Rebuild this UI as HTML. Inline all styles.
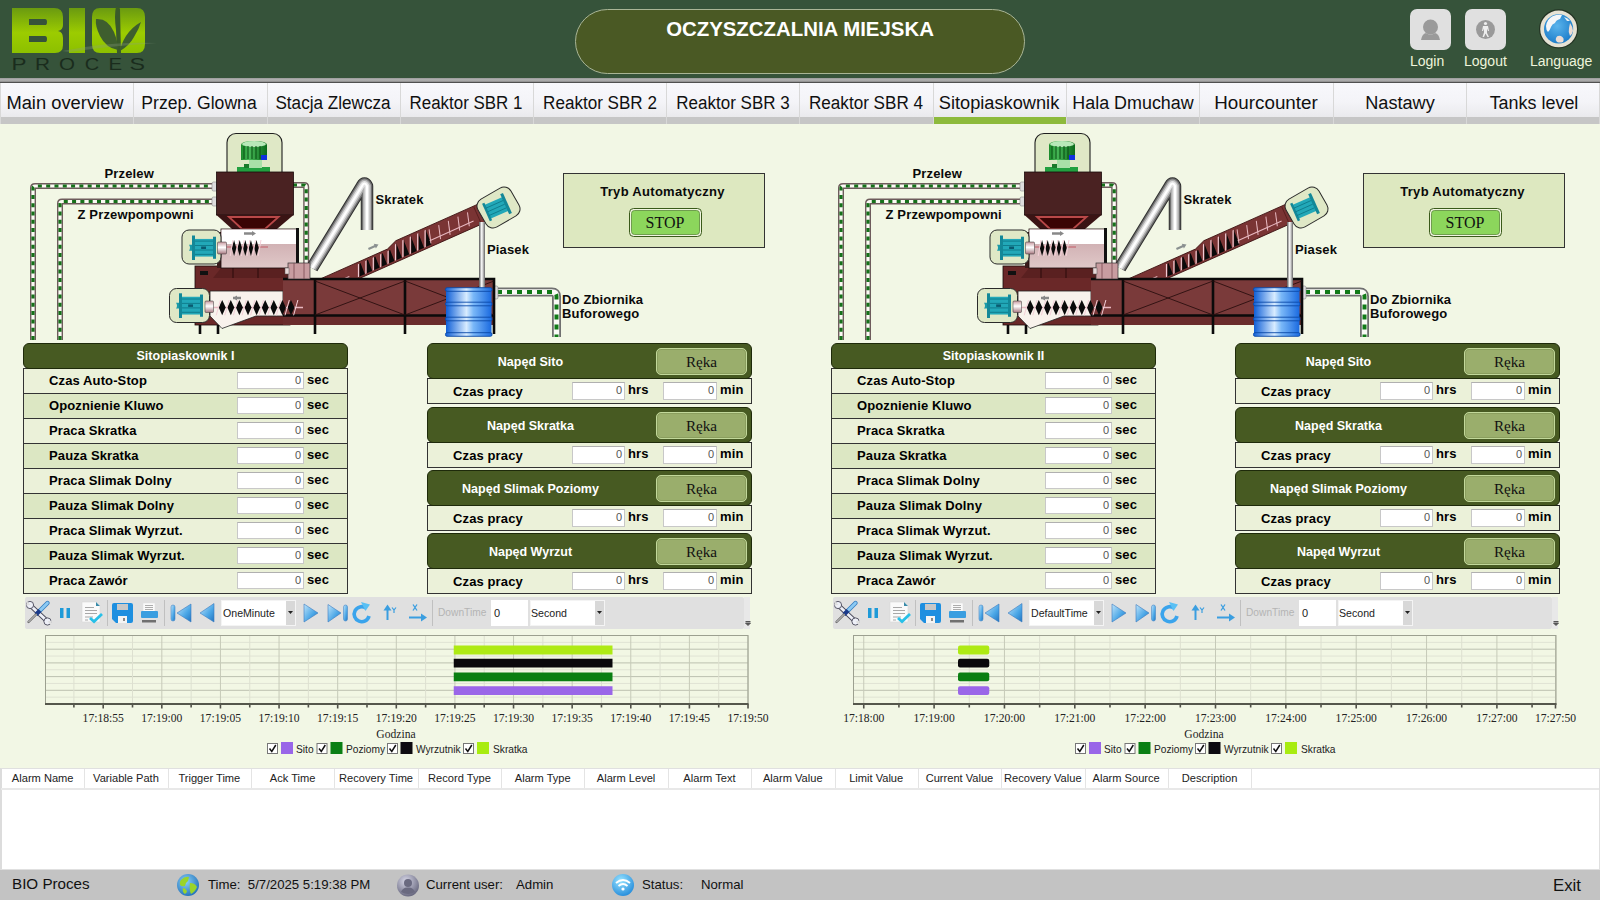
<!DOCTYPE html><html><head><meta charset="utf-8"><style>
*{margin:0;padding:0;box-sizing:border-box}
html,body{width:1600px;height:900px;overflow:hidden;background:#f2f7e5;font-family:'Liberation Sans', sans-serif}
.a{position:absolute}
.t{position:absolute;white-space:nowrap;line-height:1}
.tab{position:absolute;top:83px;height:41px;background:linear-gradient(#f8f8fc,#f4f4f8 45%,#ebebee 80%,#e0e0e0);}
.tab .bb{position:absolute;left:0;right:0;bottom:0;height:7px;background:#c6c6c6}
.tab .lb{position:absolute;left:0;right:0;top:0;bottom:0;text-align:center;font-size:18px;line-height:39px;color:#101010}
.hdr{position:absolute;background:#475a22;border-radius:6px;border:1px solid #1e2a0a;z-index:2;color:#fff;font-weight:bold;text-align:center}
.row{position:absolute;border:1px solid #333;border-top:none}
.lbl{position:absolute;font-weight:bold;font-size:13px;letter-spacing:0.12px;color:#000;white-space:nowrap;line-height:1}
.inp{position:absolute;background:#fff;border:1px solid #c8c8c8;border-top-color:#b0b0b0;font-size:11px;color:#555;text-align:right;padding-right:2px;line-height:14px}
</style></head><body>
<div class="a" style="left:0;top:0;width:1600px;height:78px;background:#36533a"></div>
<div class="a" style="left:0;top:78px;width:1600px;height:4px;background:linear-gradient(#9a9a9a,#b4b4b4 50%,#8a8a8a)"></div>
<div class="a" style="left:0;top:82px;width:1600px;height:1px;background:#505050"></div>
<svg class="a" style="left:0;top:0" width="170" height="78" viewBox="0 0 170 78">
<defs><linearGradient id="lg" x1="0" y1="0" x2="0" y2="1"><stop offset="0" stop-color="#6a9a10"/><stop offset="0.55" stop-color="#9ccc00"/><stop offset="1" stop-color="#8cc000"/></linearGradient></defs>
<path fill="url(#lg)" d="M12 8 H54 Q63 8 63 17 V25 Q63 30 58 31 Q63 32 63 38 V45 Q63 53 55 53 H12 Z M29 19 V25 H46 Q47 25 47 22 Q47 19 45 19 Z M29 36 V42 H46 Q47 42 47 39 Q47 36 45 36 Z" fill-rule="evenodd"/>
<rect x="69" y="8" width="16" height="45" fill="url(#lg)"/>
<path fill="url(#lg)" d="M100 8 H137 Q145 8 145 17 V44 Q145 53 137 53 H100 Q92 53 92 44 V17 Q92 8 100 8 Z"/>
<path fill="#3a5a2a" d="M116 7 Q119 6 120 9 L121 53 L117 53 L116 30 Q114 15 116 7 Z"/>
<path fill="#3e5e2e" d="M96 19 Q108 18 114 32 Q118 42 118 50 Q106 48 100 36 Q95 26 96 19 Z"/>
<path fill="#3e5e2e" d="M141 22 Q132 27 126 36 Q121 44 120 51 Q129 46 134 37 Q139 29 141 22 Z"/>
<text x="11.6" y="70" font-family="Liberation Sans" font-size="17" fill="#1a2c1d" textLength="15.0" lengthAdjust="spacingAndGlyphs">P</text><text x="35" y="70" font-family="Liberation Sans" font-size="17" fill="#1a2c1d" textLength="15.0" lengthAdjust="spacingAndGlyphs">R</text><text x="59" y="70" font-family="Liberation Sans" font-size="17" fill="#1a2c1d" textLength="16.0" lengthAdjust="spacingAndGlyphs">O</text><text x="84.7" y="70" font-family="Liberation Sans" font-size="17" fill="#1a2c1d" textLength="14.5" lengthAdjust="spacingAndGlyphs">C</text><text x="108.6" y="70" font-family="Liberation Sans" font-size="17" fill="#1a2c1d" textLength="13.6" lengthAdjust="spacingAndGlyphs">E</text><text x="129.6" y="70" font-family="Liberation Sans" font-size="17" fill="#1a2c1d" textLength="15.5" lengthAdjust="spacingAndGlyphs">S</text><path d="M62 51 Q110 41 157 43 Q110 46 70 52 Z" fill="#8aa080" opacity="0.3"/>
</svg>
<div class="a" style="left:575px;top:9px;width:450px;height:65px;border-radius:33px;background:#4a5924;border:1.5px solid #a9b596"></div>
<div class="t" style="left:575px;width:450px;top:19px;text-align:center;color:#fff;font-weight:bold;font-size:20.4px">OCZYSZCZALNIA MIEJSKA</div>
<div class="a" style="left:1410px;top:9px;width:41px;height:41px;border-radius:7px;background:#e0e0e0"></div>
<svg class="a" style="left:1410px;top:9px" width="41" height="41"><circle cx="20.5" cy="18" r="7.5" fill="#9a9a9a"/><path d="M11 31 Q12 25 16 24 Q20.5 27 25 24 Q29 25 30 31 Z" fill="#9a9a9a"/></svg>
<div class="a" style="left:1465px;top:9px;width:41px;height:41px;border-radius:7px;background:#e0e0e0"></div>
<svg class="a" style="left:1465px;top:9px" width="41" height="41"><circle cx="20.5" cy="20.5" r="9.5" fill="#9a9a9a"/><circle cx="20.5" cy="14.5" r="1.6" fill="#eee"/><path d="M18 17 L23 17 L24 22 L23 22 L22 19.5 L22 24 L24 28 L22.5 28 L20.5 24.5 L19 28 L17.5 28 L19 23.5 L19 19.5 L18 22 L17 22 Z" fill="#eee"/></svg>
<svg class="a" style="left:1536px;top:6px" width="46" height="46"><defs><radialGradient id="gb" cx="0.45" cy="0.4" r="0.65"><stop offset="0" stop-color="#5ab4ec"/><stop offset="1" stop-color="#1a7ac8"/></radialGradient></defs>
<circle cx="22.6" cy="22.9" r="19.6" fill="#1e2a1e" opacity="0.75"/>
<circle cx="22.6" cy="22.9" r="18.4" fill="#e6e2d4"/><circle cx="22.6" cy="22.9" r="14.6" fill="url(#gb)"/>
<path d="M10 20 Q11 13 17 10 Q22 8 26 9 L24 13 Q20 14 19 17 Q16 18 15 21 Q14 24 12 26 Q10 24 10 20 Z" fill="#f4f6f8"/>
<path d="M20 32 Q21 29 25 30 Q29 32 27 36 Q24 37 21 36 Q19 34 20 32 Z" fill="#ecdcd4"/>
<path d="M34 17 Q37 21 37 25 Q36 29 34 30 Q32 26 33 22 Z" fill="#ecdcd4"/>
<path d="M28 11 Q32 12 34 15 L31 15 Z" fill="#e8f0f4"/></svg>
<div class="t" style="left:1410px;top:54px;font-size:14px;color:#eef5dc">Login</div>
<div class="t" style="left:1464px;top:54px;font-size:14px;color:#eef5dc">Logout</div>
<div class="t" style="left:1530px;top:54px;font-size:14px;color:#eef5dc">Language</div>
<div class="a" style="left:0;top:83px;width:1600px;height:41px;background:#d8d8d8"></div>
<div class="tab" style="left:1px;width:132px"><div class="bb" style="background:#c6c6c6"></div></div>
<div class="t" style="left:-34.7px;width:200px;top:94px;text-align:center;font-size:18px;color:#101010;transform:scaleX(1.019)">Main overview</div>
<div class="tab" style="left:134px;width:133px"><div class="bb" style="background:#c6c6c6"></div></div>
<div class="t" style="left:98.9px;width:200px;top:94px;text-align:center;font-size:18px;color:#101010;transform:scaleX(0.977)">Przep. Glowna</div>
<div class="tab" style="left:268px;width:132px"><div class="bb" style="background:#c6c6c6"></div></div>
<div class="t" style="left:233.0px;width:200px;top:94px;text-align:center;font-size:18px;color:#101010;transform:scaleX(0.951)">Stacja Zlewcza</div>
<div class="tab" style="left:401px;width:132px"><div class="bb" style="background:#c6c6c6"></div></div>
<div class="t" style="left:366.4px;width:200px;top:94px;text-align:center;font-size:18px;color:#101010;transform:scaleX(0.940)">Reaktor SBR 1</div>
<div class="tab" style="left:534px;width:132px"><div class="bb" style="background:#c6c6c6"></div></div>
<div class="t" style="left:499.9px;width:200px;top:94px;text-align:center;font-size:18px;color:#101010;transform:scaleX(0.948)">Reaktor SBR 2</div>
<div class="tab" style="left:667px;width:132px"><div class="bb" style="background:#c6c6c6"></div></div>
<div class="t" style="left:633.2px;width:200px;top:94px;text-align:center;font-size:18px;color:#101010;transform:scaleX(0.944)">Reaktor SBR 3</div>
<div class="tab" style="left:800px;width:133px"><div class="bb" style="background:#c6c6c6"></div></div>
<div class="t" style="left:766.0px;width:200px;top:94px;text-align:center;font-size:18px;color:#101010;transform:scaleX(0.950)">Reaktor SBR 4</div>
<div class="tab" style="left:934px;width:132px"><div class="bb" style="background:#8dba3c"></div></div>
<div class="t" style="left:898.7px;width:200px;top:94px;text-align:center;font-size:18px;color:#101010;transform:scaleX(1.012)">Sitopiaskownik</div>
<div class="tab" style="left:1067px;width:132px"><div class="bb" style="background:#c6c6c6"></div></div>
<div class="t" style="left:1032.5px;width:200px;top:94px;text-align:center;font-size:18px;color:#101010;transform:scaleX(0.994)">Hala Dmuchaw</div>
<div class="tab" style="left:1200px;width:133px"><div class="bb" style="background:#c6c6c6"></div></div>
<div class="t" style="left:1166.3px;width:200px;top:94px;text-align:center;font-size:18px;color:#101010;transform:scaleX(1.045)">Hourcounter</div>
<div class="tab" style="left:1334px;width:132px"><div class="bb" style="background:#c6c6c6"></div></div>
<div class="t" style="left:1299.5px;width:200px;top:94px;text-align:center;font-size:18px;color:#101010;transform:scaleX(1.007)">Nastawy</div>
<div class="tab" style="left:1467px;width:132px"><div class="bb" style="background:#c6c6c6"></div></div>
<div class="t" style="left:1433.5px;width:200px;top:94px;text-align:center;font-size:18px;color:#101010;transform:scaleX(0.996)">Tanks level</div>
<div id="content"></div>
<svg class="a" style="left:0px;top:124px" width="800" height="222" viewBox="0 124 800 222"><defs>
<linearGradient id="gp" x1="0" y1="0" x2="1" y2="0"><stop offset="0" stop-color="#555"/><stop offset="0.45" stop-color="#fff"/><stop offset="1" stop-color="#666"/></linearGradient>
<linearGradient id="barrel" x1="0" y1="0" x2="1" y2="0"><stop offset="0" stop-color="#1060d8"/><stop offset="0.45" stop-color="#d8ecff"/><stop offset="0.6" stop-color="#7ab8f8"/><stop offset="1" stop-color="#1a6ae0"/></linearGradient>
<linearGradient id="coup" x1="0" y1="0" x2="0" y2="1"><stop offset="0" stop-color="#c89aa0"/><stop offset="0.45" stop-color="#fff"/><stop offset="1" stop-color="#a87880"/></linearGradient>
<linearGradient id="hous" x1="0" y1="0" x2="0" y2="1"><stop offset="0" stop-color="#c8a4a8"/><stop offset="1" stop-color="#e0c8c8"/></linearGradient>
<linearGradient id="mgreen" x1="0" y1="0" x2="1" y2="0"><stop offset="0" stop-color="#1a8a2a"/><stop offset="0.3" stop-color="#48b858"/><stop offset="1" stop-color="#0a6a1a"/></linearGradient>
</defs><path d="M33 340 V188 Q33 186 35 186 H214" fill="none" stroke="#6e5c5c" stroke-width="6" stroke-linejoin="miter"/><path d="M33 340 V188 Q33 186 35 186 H214" fill="none" stroke="#fbfbf4" stroke-width="3.2" stroke-linejoin="miter"/><path d="M33 340 V188 Q33 186 35 186 H214" fill="none" stroke="#16701a" stroke-width="3.2" stroke-dasharray="4 4.3" stroke-linejoin="miter"/><path d="M60 340 V203.5 Q60 201.5 62 201.5 H214" fill="none" stroke="#6e5c5c" stroke-width="6" stroke-linejoin="miter"/><path d="M60 340 V203.5 Q60 201.5 62 201.5 H214" fill="none" stroke="#fbfbf4" stroke-width="3.2" stroke-linejoin="miter"/><path d="M60 340 V203.5 Q60 201.5 62 201.5 H214" fill="none" stroke="#16701a" stroke-width="3.2" stroke-dasharray="4 4.3" stroke-linejoin="miter"/><path d="M293 185 H304 Q306.2 185 306.2 187 V264" fill="none" stroke="#6e5c5c" stroke-width="6" stroke-linejoin="miter"/><path d="M293 185 H304 Q306.2 185 306.2 187 V264" fill="none" stroke="#fbfbf4" stroke-width="3.2" stroke-linejoin="miter"/><path d="M293 185 H304 Q306.2 185 306.2 187 V264" fill="none" stroke="#16701a" stroke-width="3.2" stroke-dasharray="4 4.3" stroke-linejoin="miter"/><path d="M497 292 H552 Q556.5 292 556.5 296.5 V337" fill="none" stroke="#707070" stroke-width="9"/><path d="M497 292 H552 Q556.5 292 556.5 296.5 V337" fill="none" stroke="#fafaf6" stroke-width="5.4"/><path d="M497 292 H552 Q556.5 292 556.5 296.5 V337" fill="none" stroke="#127a18" stroke-width="4" stroke-dasharray="5 5"/><rect x="212" y="182" width="5" height="9" rx="1.5" fill="#ddd" stroke="#888" stroke-width="0.6"/><rect x="212" y="197" width="5" height="9" rx="1.5" fill="#ddd" stroke="#888" stroke-width="0.6"/><rect x="493" y="286" width="5" height="13" rx="1.5" fill="#ddd" stroke="#888" stroke-width="0.6"/><path d="M312 268 L362 186 Q364.5 181 367 186 L367 230" fill="none" stroke="#2e2e2e" stroke-width="12.5" stroke-linejoin="round"/><path d="M312 268 L362 186 Q364.5 181 367 186 L367 230" fill="none" stroke="#707070" stroke-width="10.5" stroke-linejoin="round"/><path d="M312 268 L362 186 Q364.5 181 367 186 L367 230" fill="none" stroke="#b0b0b0" stroke-width="8" stroke-linejoin="round"/><path d="M312 268 L362 186 Q364.5 181 367 186 L367 230" fill="none" stroke="#e4e4e4" stroke-width="5" stroke-linejoin="round"/><path d="M312 268 L362 186 Q364.5 181 367 186 L367 230" fill="none" stroke="#ffffff" stroke-width="2.2" stroke-linejoin="round"/><rect x="227" y="133.5" width="55" height="50" rx="9" fill="#dfe8c6" stroke="#1e1e1e" stroke-width="1.1"/><rect x="237" y="167" width="33" height="5.5" fill="#22a040"/><rect x="244" y="164" width="8" height="4" fill="#1a7a2a"/><rect x="249" y="159" width="13" height="9" fill="#a8e0a8"/><path d="M241 145 Q241 141 254 141 Q267 141 267 145 V160 H241 Z" fill="url(#mgreen)"/><ellipse cx="254" cy="144" rx="12" ry="3" fill="#b8e8b8"/><path d="M244 146 V159 M248 146 V159 M252 146 V159 M256 146 V159 M260 146 V159" stroke="#064a10" stroke-width="1"/><rect x="261" y="155" width="6" height="5" fill="#1030e0"/><rect x="216.5" y="172" width="77" height="43" fill="#4a2222" stroke="#1a0a0a" stroke-width="0.8"/><path d="M216.5 215 H293.5 L277 229 H232 Z" fill="#3a1414"/><path d="M229 217 H278.5 L265 229 H242 Z" fill="#3a0404" stroke="#b84848" stroke-width="1.8"/><rect x="195" y="266" width="95" height="59" fill="#6a2828" stroke="#1a0a0a" stroke-width="0.8"/><rect x="200" y="271" width="8" height="4" fill="#111"/><path d="M213 278 L221 268 H290 V278 Z" fill="#5a2020"/><path d="M233 268 V278 M258 268 V278" stroke="#2a0a0a" stroke-width="1"/><rect x="217" y="232" width="5" height="36" fill="#3a1a1a"/><rect x="221" y="229" width="77" height="39" fill="url(#hous)" stroke="#1a0a0a" stroke-width="0.8"/><rect x="221.5" y="229.5" width="76" height="14.5" fill="#fff"/><rect x="296" y="228" width="3" height="40" fill="#111"/><path d="M244 233.5 H253" stroke="#888" stroke-width="2.5"/><path d="M252 231 L256 233.5 L252 236 Z" fill="#888"/><line x1="226" y1="247" x2="268" y2="247" stroke="#c87880" stroke-width="1.5"/><path d="M231.8 248.0 L234.1 240 L236.3 248.0 L234.1 256 Z" fill="#0a0a0a"/><path d="M237.4 248.0 L239.7 240 L241.9 248.0 L239.7 256 Z" fill="#0a0a0a"/><path d="M243.0 248.0 L245.3 240 L247.5 248.0 L245.3 256 Z" fill="#0a0a0a"/><path d="M248.6 248.0 L250.9 240 L253.1 248.0 L250.9 256 Z" fill="#0a0a0a"/><path d="M254.2 248.0 L256.5 240 L258.7 248.0 L256.5 256 Z" fill="#0a0a0a"/><line x1="230.2" y1="256" x2="233.0" y2="240" stroke="#f4d0d8" stroke-width="1"/><line x1="235.8" y1="256" x2="238.6" y2="240" stroke="#f4d0d8" stroke-width="1"/><line x1="241.4" y1="256" x2="244.2" y2="240" stroke="#f4d0d8" stroke-width="1"/><line x1="247.0" y1="256" x2="249.8" y2="240" stroke="#f4d0d8" stroke-width="1"/><line x1="252.6" y1="256" x2="255.4" y2="240" stroke="#f4d0d8" stroke-width="1"/><line x1="258.2" y1="256" x2="261.0" y2="240" stroke="#f4d0d8" stroke-width="1"/><path d="M210 291 H283 V316 H256 L222 328.5 L210 316 Z" fill="#f8f2ec" stroke="#222" stroke-width="0.8"/><path d="M233 298 H241" stroke="#888" stroke-width="2.5"/><path d="M237 295.5 L233 298 L237 300.5 Z" fill="#888"/><clipPath id="icl0"><path transform="translate(488.8 220.9) rotate(-24)" d="M-8 -1.8 V-17.5 H-93 L-102 -13.6 H-178 V-1.8 Z"/></clipPath><g transform="translate(488.8 220.9) rotate(-24)"><path d="M0 0 V-19.7 H-93 L-104 -15.5 H-178 V0 Z" fill="#7a3434" stroke="#3a1010" stroke-width="0.8"/><path d="M-8 -19.5 V0" stroke="#5a2020" stroke-width="1"/></g><g clip-path="url(#icl0)"><path d="M359.5 257.8 L359.5 279.8 L365.1 279.8 L365.1 274.8 L360.0 261.8 Z" fill="#0a0a0a"/><line x1="358.5" y1="180" x2="358.5" y2="300" stroke="#f2ccd4" stroke-width="1.2"/><path d="M366.9 254.5 L366.9 276.5 L372.5 276.5 L372.5 271.5 L367.4 258.5 Z" fill="#0a0a0a"/><line x1="365.9" y1="180" x2="365.9" y2="300" stroke="#f2ccd4" stroke-width="1.2"/><path d="M374.3 251.2 L374.3 273.2 L379.9 273.2 L379.9 268.2 L374.8 255.2 Z" fill="#0a0a0a"/><line x1="373.3" y1="180" x2="373.3" y2="300" stroke="#f2ccd4" stroke-width="1.2"/><path d="M381.7 247.9 L381.7 269.9 L387.3 269.9 L387.3 264.9 L382.2 251.9 Z" fill="#0a0a0a"/><line x1="380.7" y1="180" x2="380.7" y2="300" stroke="#f2ccd4" stroke-width="1.2"/><path d="M389.1 244.6 L389.1 266.6 L394.7 266.6 L394.7 261.6 L389.6 248.6 Z" fill="#0a0a0a"/><line x1="388.1" y1="180" x2="388.1" y2="300" stroke="#f2ccd4" stroke-width="1.2"/><path d="M396.5 241.3 L396.5 263.3 L402.1 263.3 L402.1 258.3 L397.0 245.3 Z" fill="#0a0a0a"/><line x1="395.5" y1="180" x2="395.5" y2="300" stroke="#f2ccd4" stroke-width="1.2"/><path d="M403.9 238.0 L403.9 260.0 L409.5 260.0 L409.5 255.0 L404.4 242.0 Z" fill="#0a0a0a"/><line x1="402.9" y1="180" x2="402.9" y2="300" stroke="#f2ccd4" stroke-width="1.2"/><path d="M411.3 234.7 L411.3 256.7 L416.9 256.7 L416.9 251.7 L411.8 238.7 Z" fill="#0a0a0a"/><line x1="410.3" y1="180" x2="410.3" y2="300" stroke="#f2ccd4" stroke-width="1.2"/><path d="M418.7 231.4 L418.7 253.4 L424.3 253.4 L424.3 248.4 L419.2 235.4 Z" fill="#0a0a0a"/><line x1="417.7" y1="180" x2="417.7" y2="300" stroke="#f2ccd4" stroke-width="1.2"/><path d="M426.1 228.1 L426.1 250.1 L431.7 250.1 L431.7 245.1 L426.6 232.1 Z" fill="#0a0a0a"/><line x1="425.1" y1="180" x2="425.1" y2="300" stroke="#f2ccd4" stroke-width="1.2"/></g><g transform="translate(488.8 220.9) rotate(-24)"><path d="M-172 -6 H-150 M-62 -6 H-14" stroke="#e8b8c0" stroke-width="1.1"/><line x1="-62.0" y1="-3" x2="-58.0" y2="-16.5" stroke="#e8b8c0" stroke-width="1"/><line x1="-51.5" y1="-3" x2="-47.5" y2="-16.5" stroke="#e8b8c0" stroke-width="1"/><line x1="-41.0" y1="-3" x2="-37.0" y2="-16.5" stroke="#e8b8c0" stroke-width="1"/><line x1="-30.5" y1="-3" x2="-26.5" y2="-16.5" stroke="#e8b8c0" stroke-width="1"/><line x1="-20.0" y1="-3" x2="-16.0" y2="-16.5" stroke="#e8b8c0" stroke-width="1"/></g><g transform="translate(373 247) rotate(-24)"><path d="M-5 0 H3" stroke="#8a9090" stroke-width="2.2"/><path d="M2 -2.6 L6 0 L2 2.6 Z" fill="#8a9090"/></g><rect x="283" y="279" width="211" height="46" fill="#7a3a3a"/><rect x="283" y="315" width="211" height="10" fill="#6a2c2c"/><path d="M283 279 H494 V325 M283 315.5 H494 M315 279 V334 M405 279 V334 M494 279 V334 M200 325 V334 M218 325 V334" stroke="#0a0a0a" stroke-width="2.6" fill="none"/><path d="M315 281 L405 315 M315 315 L405 281 M405 281 L494 315 M405 315 L494 281" stroke="#2a0e0e" stroke-width="0.9"/><line x1="213" y1="307.5" x2="303" y2="307.5" stroke="#e8b8c0" stroke-width="1.6"/><path d="M218.8 307.6 L222.2 300 L225.7 307.6 L222.2 315.3 Z" fill="#0a0a0a"/><path d="M227.4 307.6 L230.8 300 L234.3 307.6 L230.8 315.3 Z" fill="#0a0a0a"/><path d="M236.0 307.6 L239.4 300 L242.9 307.6 L239.4 315.3 Z" fill="#0a0a0a"/><path d="M244.6 307.6 L248.0 300 L251.5 307.6 L248.0 315.3 Z" fill="#0a0a0a"/><path d="M253.2 307.6 L256.6 300 L260.1 307.6 L256.6 315.3 Z" fill="#0a0a0a"/><path d="M261.8 307.6 L265.2 300 L268.7 307.6 L265.2 315.3 Z" fill="#0a0a0a"/><path d="M270.4 307.6 L273.8 300 L277.3 307.6 L273.8 315.3 Z" fill="#0a0a0a"/><path d="M279.0 307.6 L282.4 300 L285.9 307.6 L282.4 315.3 Z" fill="#0a0a0a"/><path d="M287.6 307.6 L291.0 300 L294.5 307.6 L291.0 315.3 Z" fill="#0a0a0a"/><line x1="216.2" y1="315.3" x2="220.5" y2="300" stroke="#f4d0d8" stroke-width="1"/><line x1="224.8" y1="315.3" x2="229.1" y2="300" stroke="#f4d0d8" stroke-width="1"/><line x1="233.4" y1="315.3" x2="237.7" y2="300" stroke="#f4d0d8" stroke-width="1"/><line x1="242.0" y1="315.3" x2="246.3" y2="300" stroke="#f4d0d8" stroke-width="1"/><line x1="250.6" y1="315.3" x2="254.9" y2="300" stroke="#f4d0d8" stroke-width="1"/><line x1="259.2" y1="315.3" x2="263.5" y2="300" stroke="#f4d0d8" stroke-width="1"/><line x1="267.8" y1="315.3" x2="272.1" y2="300" stroke="#f4d0d8" stroke-width="1"/><line x1="276.4" y1="315.3" x2="280.7" y2="300" stroke="#f4d0d8" stroke-width="1"/><line x1="285.0" y1="315.3" x2="289.3" y2="300" stroke="#f4d0d8" stroke-width="1"/><line x1="293.6" y1="315.3" x2="297.9" y2="300" stroke="#f4d0d8" stroke-width="1"/><rect x="288" y="263" width="22" height="16" fill="#c89ca0" stroke="#333" stroke-width="0.7"/><path d="M294 263 V279 M304 263 V279" stroke="#7a4a50" stroke-width="0.8"/><rect x="285" y="268" width="4" height="6" fill="#e8d8d8" stroke="#555" stroke-width="0.5"/><g transform="translate(498.5 207.5) rotate(-30)"><rect x="-19" y="-16" width="38" height="32" rx="8" fill="#dfe8c6" stroke="#2a2a2a" stroke-width="1"/></g><g transform="translate(498.5 207.5) rotate(-24)"><rect x="-12" y="-8" width="20" height="15" fill="#22a8b8"/><rect x="7" y="-11.5" width="3" height="22" fill="#138898"/><rect x="-13.5" y="-10" width="2.5" height="19" fill="#138898"/><path d="M-12 -4.5 H7 M-12 -0.5 H7 M-12 3.5 H7" stroke="#0e7888" stroke-width="0.8"/></g><rect x="479" y="222" width="6" height="68" fill="url(#gp)"/><rect x="446" y="289" width="45.5" height="47" rx="2" fill="url(#barrel)"/><rect x="445.5" y="287.7" width="46.5" height="3.6" rx="1.5" fill="url(#barrel)" stroke="#0a4aa8" stroke-width="0.9"/><rect x="445.5" y="302.2" width="46.5" height="3.6" rx="1.5" fill="url(#barrel)" stroke="#0a4aa8" stroke-width="0.9"/><rect x="445.5" y="317.2" width="46.5" height="3.6" rx="1.5" fill="url(#barrel)" stroke="#0a4aa8" stroke-width="0.9"/><rect x="445.5" y="332.7" width="46.5" height="3.6" rx="1.5" fill="url(#barrel)" stroke="#0a4aa8" stroke-width="0.9"/><rect x="182" y="230" width="39" height="34" rx="7" fill="#dfe8c6" stroke="#2a2a2a" stroke-width="1"/><path d="M189 244.81 Q191 247.75 189 250.69 L192 250.69 L192 244.81 Z" fill="#1a9aa8"/><rect x="192" y="235.5" width="3" height="24.5" fill="#138898"/><rect x="195" y="238.93" width="18" height="17.64" fill="#22a8b8"/><line x1="195" x2="213" y1="241.1" y2="241.1" stroke="#0e7888" stroke-width="0.9"/><line x1="195" x2="213" y1="245.5" y2="245.5" stroke="#0e7888" stroke-width="0.9"/><line x1="195" x2="213" y1="250.0" y2="250.0" stroke="#0e7888" stroke-width="0.9"/><line x1="195" x2="213" y1="254.4" y2="254.4" stroke="#0e7888" stroke-width="0.9"/><rect x="213" y="236.725" width="3" height="22.05" fill="#138898"/><rect x="201.15" y="246.525" width="4.859999999999999" height="2.45" fill="#0a5a70"/><rect x="217.5" y="242" width="9" height="12" rx="1" fill="url(#coup)" stroke="#333" stroke-width="0.5"/><rect x="169.5" y="288.5" width="40" height="34" rx="7" fill="#dfe8c6" stroke="#2a2a2a" stroke-width="1"/><path d="M176 302.68600000000004 Q178 305.65000000000003 176 308.61400000000003 L179 308.61400000000003 L179 302.68600000000004 Z" fill="#1a9aa8"/><rect x="179" y="293.3" width="3" height="24.7" fill="#138898"/><rect x="182" y="296.75800000000004" width="18" height="17.784" fill="#22a8b8"/><line x1="182" x2="200" y1="299.0" y2="299.0" stroke="#0e7888" stroke-width="0.9"/><line x1="182" x2="200" y1="303.4" y2="303.4" stroke="#0e7888" stroke-width="0.9"/><line x1="182" x2="200" y1="307.9" y2="307.9" stroke="#0e7888" stroke-width="0.9"/><line x1="182" x2="200" y1="312.3" y2="312.3" stroke="#0e7888" stroke-width="0.9"/><rect x="200" y="294.535" width="3" height="22.23" fill="#138898"/><rect x="188.15" y="304.415" width="4.859999999999999" height="2.47" fill="#0a5a70"/><rect x="205" y="301" width="8.5" height="11.5" rx="1" fill="url(#coup)" stroke="#333" stroke-width="0.5"/><text x="104.5" y="177.5" font-family="Liberation Sans" font-weight="bold" font-size="13" letter-spacing="0.15" fill="#0a0a0a">Przelew</text><text x="77.5" y="219" font-family="Liberation Sans" font-weight="bold" font-size="13" letter-spacing="0.15" fill="#0a0a0a">Z Przewpompowni</text><text x="375.5" y="204" font-family="Liberation Sans" font-weight="bold" font-size="13" letter-spacing="0.15" fill="#0a0a0a">Skratek</text><text x="487" y="254" font-family="Liberation Sans" font-weight="bold" font-size="13" letter-spacing="0.15" fill="#0a0a0a">Piasek</text><text x="562" y="304" font-family="Liberation Sans" font-weight="bold" font-size="13" letter-spacing="0.15" fill="#0a0a0a">Do Zbiornika</text><text x="562" y="317.5" font-family="Liberation Sans" font-weight="bold" font-size="13" letter-spacing="0.15" fill="#0a0a0a">Buforowego</text></svg>
<svg class="a" style="left:0px;top:124px" width="800" height="222" viewBox="0 124 800 222"><rect x="563.5" y="173.5" width="201" height="74" fill="#dde8c0" stroke="#333" stroke-width="1"/><text x="662.5" y="196" text-anchor="middle" font-family="Liberation Sans" font-weight="bold" font-size="13" letter-spacing="0.3" fill="#0a0a0a">Tryb Automatyczny</text><rect x="629.5" y="208.5" width="72" height="28" rx="4" fill="#f0f4e0" stroke="#3a5a1a" stroke-width="1"/><rect x="631.5" y="210.5" width="68" height="24" rx="3" fill="#8cd65c" stroke="#5a8a3a" stroke-width="0.8"/><text x="665" y="228" text-anchor="middle" font-family="Liberation Serif" font-size="16" fill="#111">STOP</text></svg>
<div class="hdr" style="left:23px;top:343px;width:325px;height:26px;font-size:12.5px;line-height:25px">Sitopiaskownik I</div>
<div class="row" style="left:23px;top:368px;width:325px;height:26px;background:#ebf1d9;border-top:1px solid #333"></div>
<div class="lbl" style="left:49px;top:374px">Czas Auto-Stop</div>
<div class="inp" style="left:237px;top:372px;width:67px;height:17px">0</div>
<div class="lbl" style="left:307px;top:373px">sec</div>
<div class="row" style="left:23px;top:393px;width:325px;height:26px;background:#dce7c3;border-top:1px solid #333"></div>
<div class="lbl" style="left:49px;top:399px">Opoznienie Kluwo</div>
<div class="inp" style="left:237px;top:397px;width:67px;height:17px">0</div>
<div class="lbl" style="left:307px;top:398px">sec</div>
<div class="row" style="left:23px;top:418px;width:325px;height:26px;background:#ebf1d9;border-top:1px solid #333"></div>
<div class="lbl" style="left:49px;top:424px">Praca Skratka</div>
<div class="inp" style="left:237px;top:422px;width:67px;height:17px">0</div>
<div class="lbl" style="left:307px;top:423px">sec</div>
<div class="row" style="left:23px;top:443px;width:325px;height:26px;background:#dce7c3;border-top:1px solid #333"></div>
<div class="lbl" style="left:49px;top:449px">Pauza Skratka</div>
<div class="inp" style="left:237px;top:447px;width:67px;height:17px">0</div>
<div class="lbl" style="left:307px;top:448px">sec</div>
<div class="row" style="left:23px;top:468px;width:325px;height:26px;background:#ebf1d9;border-top:1px solid #333"></div>
<div class="lbl" style="left:49px;top:474px">Praca Slimak Dolny</div>
<div class="inp" style="left:237px;top:472px;width:67px;height:17px">0</div>
<div class="lbl" style="left:307px;top:473px">sec</div>
<div class="row" style="left:23px;top:493px;width:325px;height:26px;background:#dce7c3;border-top:1px solid #333"></div>
<div class="lbl" style="left:49px;top:499px">Pauza Slimak Dolny</div>
<div class="inp" style="left:237px;top:497px;width:67px;height:17px">0</div>
<div class="lbl" style="left:307px;top:498px">sec</div>
<div class="row" style="left:23px;top:518px;width:325px;height:26px;background:#ebf1d9;border-top:1px solid #333"></div>
<div class="lbl" style="left:49px;top:524px">Praca Slimak Wyrzut.</div>
<div class="inp" style="left:237px;top:522px;width:67px;height:17px">0</div>
<div class="lbl" style="left:307px;top:523px">sec</div>
<div class="row" style="left:23px;top:543px;width:325px;height:26px;background:#dce7c3;border-top:1px solid #333"></div>
<div class="lbl" style="left:49px;top:549px">Pauza Slimak Wyrzut.</div>
<div class="inp" style="left:237px;top:547px;width:67px;height:17px">0</div>
<div class="lbl" style="left:307px;top:548px">sec</div>
<div class="row" style="left:23px;top:568px;width:325px;height:26px;background:#ebf1d9;border-top:1px solid #333"></div>
<div class="lbl" style="left:49px;top:574px">Praca Zawór</div>
<div class="inp" style="left:237px;top:572px;width:67px;height:17px">0</div>
<div class="lbl" style="left:307px;top:573px">sec</div>
<div class="hdr" style="left:427px;top:343px;width:325px;height:36px;font-size:12.5px;line-height:36px;text-align:left"><span style="position:absolute;left:0;width:205px;text-align:center">Napęd Sito</span></div>
<div class="a" style="z-index:3;left:656px;top:348px;width:91px;height:27px;border-radius:5px;background:#9aae6c;border:1.5px solid #c2d89a;box-shadow:inset 0 0 0 1px #8a9e5e"></div>
<div class="t" style="z-index:3;left:656px;width:91px;top:354px;text-align:center;font-family:'Liberation Serif', serif;font-size:15.2px;color:#111">Ręka</div>
<div class="row" style="left:427px;top:378px;width:325px;height:26px;background:#ebf1d9;border-top:1px solid #222"></div>
<div class="lbl" style="left:453px;top:385px">Czas pracy</div>
<div class="inp" style="left:572px;top:382px;width:53px;height:18px">0</div>
<div class="lbl" style="left:628px;top:383px">hrs</div>
<div class="inp" style="left:663px;top:382px;width:54px;height:18px">0</div>
<div class="lbl" style="left:720px;top:383px">min</div>
<div class="hdr" style="left:427px;top:407px;width:325px;height:36px;font-size:12.5px;line-height:36px;text-align:left"><span style="position:absolute;left:0;width:205px;text-align:center">Napęd Skratka</span></div>
<div class="a" style="z-index:3;left:656px;top:412px;width:91px;height:27px;border-radius:5px;background:#9aae6c;border:1.5px solid #c2d89a;box-shadow:inset 0 0 0 1px #8a9e5e"></div>
<div class="t" style="z-index:3;left:656px;width:91px;top:418px;text-align:center;font-family:'Liberation Serif', serif;font-size:15.2px;color:#111">Ręka</div>
<div class="row" style="left:427px;top:442px;width:325px;height:26px;background:#ebf1d9;border-top:1px solid #222"></div>
<div class="lbl" style="left:453px;top:449px">Czas pracy</div>
<div class="inp" style="left:572px;top:446px;width:53px;height:18px">0</div>
<div class="lbl" style="left:628px;top:447px">hrs</div>
<div class="inp" style="left:663px;top:446px;width:54px;height:18px">0</div>
<div class="lbl" style="left:720px;top:447px">min</div>
<div class="hdr" style="left:427px;top:470px;width:325px;height:36px;font-size:12.5px;line-height:36px;text-align:left"><span style="position:absolute;left:0;width:205px;text-align:center">Napęd Slimak Poziomy</span></div>
<div class="a" style="z-index:3;left:656px;top:475px;width:91px;height:27px;border-radius:5px;background:#9aae6c;border:1.5px solid #c2d89a;box-shadow:inset 0 0 0 1px #8a9e5e"></div>
<div class="t" style="z-index:3;left:656px;width:91px;top:481px;text-align:center;font-family:'Liberation Serif', serif;font-size:15.2px;color:#111">Ręka</div>
<div class="row" style="left:427px;top:505px;width:325px;height:26px;background:#ebf1d9;border-top:1px solid #222"></div>
<div class="lbl" style="left:453px;top:512px">Czas pracy</div>
<div class="inp" style="left:572px;top:509px;width:53px;height:18px">0</div>
<div class="lbl" style="left:628px;top:510px">hrs</div>
<div class="inp" style="left:663px;top:509px;width:54px;height:18px">0</div>
<div class="lbl" style="left:720px;top:510px">min</div>
<div class="hdr" style="left:427px;top:533px;width:325px;height:36px;font-size:12.5px;line-height:36px;text-align:left"><span style="position:absolute;left:0;width:205px;text-align:center">Napęd Wyrzut</span></div>
<div class="a" style="z-index:3;left:656px;top:538px;width:91px;height:27px;border-radius:5px;background:#9aae6c;border:1.5px solid #c2d89a;box-shadow:inset 0 0 0 1px #8a9e5e"></div>
<div class="t" style="z-index:3;left:656px;width:91px;top:544px;text-align:center;font-family:'Liberation Serif', serif;font-size:15.2px;color:#111">Ręka</div>
<div class="row" style="left:427px;top:568px;width:325px;height:26px;background:#ebf1d9;border-top:1px solid #222"></div>
<div class="lbl" style="left:453px;top:575px">Czas pracy</div>
<div class="inp" style="left:572px;top:572px;width:53px;height:18px">0</div>
<div class="lbl" style="left:628px;top:573px">hrs</div>
<div class="inp" style="left:663px;top:572px;width:54px;height:18px">0</div>
<div class="lbl" style="left:720px;top:573px">min</div>
<div class="a" style="left:25px;top:597px;width:719px;height:32px;background:#e0e0e0;border-radius:2px"></div>
<div class="a" style="left:744px;top:597px;width:6px;height:32px;background:#e8e8e8"></div>
<svg class="a" style="left:744px;top:618px" width="8" height="10"><path d="M1.5 3.5 H6.5 M1.5 5 L4 7.5 L6.5 5 Z" stroke="#555" stroke-width="1" fill="#555"/></svg>
<svg class="a" style="left:25px;top:597px" width="420" height="32" viewBox="25 597 420 32">
<defs>
<linearGradient id="tri0" x1="0" y1="0" x2="1" y2="1"><stop offset="0" stop-color="#bfe4fa"/><stop offset="0.6" stop-color="#4aa6e6"/><stop offset="1" stop-color="#2274c0"/></linearGradient>
</defs>
<!-- tools -->
<path d="M31 606 L47 621" stroke="#4a4a5a" stroke-width="4.6" stroke-linecap="round"/>
<path d="M31 606 L47 621" stroke="#eef0f8" stroke-width="2.8" stroke-linecap="round"/>
<circle cx="30" cy="605" r="3.6" fill="#eef0f8" stroke="#4a4a5a" stroke-width="0.9"/>
<circle cx="47.5" cy="621.5" r="3.6" fill="#eef0f8" stroke="#4a4a5a" stroke-width="0.9"/>
<path d="M27.5 601.5 L30.5 605 L26 605.5 Z" fill="#e0e0e0"/>
<path d="M51 625 L47.5 621.5 L52 620.5 Z" fill="#e0e0e0"/>
<path d="M47.5 603 L40 610.5" stroke="#3a80c0" stroke-width="4.4" stroke-linecap="round"/>
<path d="M47.5 603 L40 610.5" stroke="#8ccaf4" stroke-width="2.6" stroke-linecap="round"/>
<path d="M40 610.5 L36 614.5" stroke="#1a3a8a" stroke-width="4.2"/>
<path d="M36 614.5 L28.5 622" stroke="#666" stroke-width="2.4" stroke-linecap="round"/>
<path d="M36 614.5 L28.5 622" stroke="#ddd" stroke-width="1" stroke-linecap="round"/>
<!-- pause -->
<rect x="60" y="608" width="3.5" height="10" fill="#1e9ad8"/><rect x="66.5" y="608" width="3.5" height="10" fill="#1e9ad8"/>
<!-- doc -->
<path d="M82 602 H97 L100 605 V622 H82 Z" fill="#fafafa" stroke="#d8d8d8" stroke-width="0.6"/>
<path d="M96 602 L100 606 L96 606 Z" fill="#3a8aa8"/>
<path d="M85 607.5 H94 M85 610.5 H97 M85 613.5 H97 M85 617 H93 M85 620 H88" stroke="#a8a8a8" stroke-width="1.2"/>
<path d="M90 618 L94 621.5 L102 614" stroke="#28c0e8" stroke-width="2.8" fill="none"/>
<!-- sep -->
<rect x="107" y="600" width="1" height="26" fill="#c0c0c0"/>
<!-- floppy -->
<path d="M114 603 H131 Q133 603 133 605 V621 Q133 623 131 623 H116 L112 619 V605 Q112 603 114 603 Z" fill="#1e8fe0"/>
<rect x="117" y="604" width="11" height="6" fill="#c8c8c8"/>
<rect x="118" y="616" width="9" height="7" fill="#f4f4f4"/><rect x="123" y="618" width="2" height="3" fill="#888"/>
<!-- printer -->
<rect x="143" y="603" width="12" height="9" fill="#fafafa" stroke="#ddd" stroke-width="0.5"/>
<path d="M145 605.5 H153 M145 607.5 H153 M145 609.5 H153" stroke="#999" stroke-width="0.8"/>
<rect x="141" y="611" width="17" height="7" rx="1" fill="#3a9ee0"/>
<rect x="142" y="620" width="14" height="2.5" fill="#707070"/>
<!-- sep -->
<rect x="164" y="600" width="1" height="26" fill="#c0c0c0"/>
<!-- first -->
<rect x="171" y="605" width="4" height="16" rx="2" fill="url(#tri0)" stroke="#4a8ac8" stroke-width="0.6"/>
<path d="M191 604 V622 L177 613 Z" fill="url(#tri0)" stroke="#3a7ac0" stroke-width="0.6"/>
<!-- prev -->
<path d="M214 603.5 V622 L200 613 Z" fill="url(#tri0)" stroke="#3a7ac0" stroke-width="0.6"/>
<!-- next -->
<path d="M304 604 V622 L318 613 Z" fill="url(#tri0)" stroke="#3a7ac0" stroke-width="0.6"/>
<!-- last -->
<path d="M328 604.5 V622 L341 613 Z" fill="url(#tri0)" stroke="#3a7ac0" stroke-width="0.6"/>
<rect x="343.5" y="605" width="4" height="16" rx="2" fill="url(#tri0)" stroke="#4a8ac8" stroke-width="0.6"/>
<!-- refresh -->
<path d="M366 608 A7.5 7.5 0 1 0 369 616" stroke="#3aa4ec" stroke-width="3.6" fill="none"/>
<path d="M361 602 L370 604.5 L365.5 611 Z" fill="#5ac0f4"/>
<!-- up y -->
<path d="M387.5 620 V609" stroke="#3a9ee0" stroke-width="2"/><path d="M383.5 610.5 L387.5 604.5 L391.5 610.5 Z" fill="#3a9ee0"/>
<path d="M392 607.5 L394 610 L396 607.5 M394 610 V613" stroke="#3a9ee0" stroke-width="1.2" fill="none"/>
<!-- x arrow -->
<path d="M413 604.5 L417 610.5 M417 604.5 L413 610.5" stroke="#3a9ee0" stroke-width="1.3"/>
<path d="M409 617.5 H422" stroke="#3a9ee0" stroke-width="2"/><path d="M421 613.5 L427 617.5 L421 621.5 Z" fill="#3a9ee0"/>
<!-- sep -->
<rect x="432" y="600" width="1" height="26" fill="#c0c0c0"/>
</svg>
<div class="a" style="left:221px;top:600px;width:75px;height:26px;background:#fff;border:1px solid #f4f4f4"></div>
<div class="a" style="left:286px;top:601px;width:9px;height:24px;background:#d8d8d8"></div>
<svg class="a" style="left:287px;top:610px" width="7" height="5"><path d="M1 1 H6 L3.5 4 Z" fill="#222"/></svg>
<div class="t" style="left:223px;top:608px;font-size:10.6px;color:#222">OneMinute</div>
<div class="t" style="left:438px;top:608px;font-size:10.2px;color:#b4b4b4">DownTime</div>
<div class="a" style="left:491px;top:600px;width:37px;height:26px;background:#fff"></div>
<div class="t" style="left:494px;top:608px;font-size:11px;color:#222">0</div>
<div class="a" style="left:530px;top:600px;width:75px;height:26px;background:#fff;border:1px solid #f4f4f4"></div>
<div class="a" style="left:595px;top:601px;width:9px;height:24px;background:#d8d8d8"></div>
<svg class="a" style="left:596px;top:610px" width="7" height="5"><path d="M1 1 H6 L3.5 4 Z" fill="#222"/></svg>
<div class="t" style="left:531px;top:608px;font-size:10.6px;color:#222">Second</div>
<svg class="a" style="left:0px;top:0" width="800" height="760" viewBox="0 0 800 760"><rect x="45.5" y="635.5" width="702.5" height="68.5" fill="#f2f7e4"/><line x1="45.5" x2="748.0" y1="642.35" y2="642.35" stroke="#e0e3d4" stroke-width="1"/><line x1="45.5" x2="748.0" y1="649.20" y2="649.20" stroke="#bcc0b0" stroke-width="1"/><line x1="45.5" x2="748.0" y1="656.05" y2="656.05" stroke="#e0e3d4" stroke-width="1"/><line x1="45.5" x2="748.0" y1="662.90" y2="662.90" stroke="#bcc0b0" stroke-width="1"/><line x1="45.5" x2="748.0" y1="669.75" y2="669.75" stroke="#e0e3d4" stroke-width="1"/><line x1="45.5" x2="748.0" y1="676.60" y2="676.60" stroke="#bcc0b0" stroke-width="1"/><line x1="45.5" x2="748.0" y1="683.45" y2="683.45" stroke="#e0e3d4" stroke-width="1"/><line x1="45.5" x2="748.0" y1="690.30" y2="690.30" stroke="#bcc0b0" stroke-width="1"/><line x1="45.5" x2="748.0" y1="697.15" y2="697.15" stroke="#e0e3d4" stroke-width="1"/><line x1="73.89" x2="73.89" y1="635.5" y2="704.0" stroke="#dde0d0" stroke-width="1"/><line x1="73.89" x2="73.89" y1="704.0" y2="707.5" stroke="#505048" stroke-width="1.6"/><line x1="103.20" x2="103.20" y1="635.5" y2="704.0" stroke="#c6cab8" stroke-width="1"/><line x1="103.20" x2="103.20" y1="704.0" y2="708.5" stroke="#505048" stroke-width="1.6"/><line x1="132.51" x2="132.51" y1="635.5" y2="704.0" stroke="#dde0d0" stroke-width="1"/><line x1="132.51" x2="132.51" y1="704.0" y2="707.5" stroke="#505048" stroke-width="1.6"/><line x1="161.82" x2="161.82" y1="635.5" y2="704.0" stroke="#c6cab8" stroke-width="1"/><line x1="161.82" x2="161.82" y1="704.0" y2="708.5" stroke="#505048" stroke-width="1.6"/><line x1="191.13" x2="191.13" y1="635.5" y2="704.0" stroke="#dde0d0" stroke-width="1"/><line x1="191.13" x2="191.13" y1="704.0" y2="707.5" stroke="#505048" stroke-width="1.6"/><line x1="220.44" x2="220.44" y1="635.5" y2="704.0" stroke="#c6cab8" stroke-width="1"/><line x1="220.44" x2="220.44" y1="704.0" y2="708.5" stroke="#505048" stroke-width="1.6"/><line x1="249.75" x2="249.75" y1="635.5" y2="704.0" stroke="#dde0d0" stroke-width="1"/><line x1="249.75" x2="249.75" y1="704.0" y2="707.5" stroke="#505048" stroke-width="1.6"/><line x1="279.06" x2="279.06" y1="635.5" y2="704.0" stroke="#c6cab8" stroke-width="1"/><line x1="279.06" x2="279.06" y1="704.0" y2="708.5" stroke="#505048" stroke-width="1.6"/><line x1="308.37" x2="308.37" y1="635.5" y2="704.0" stroke="#dde0d0" stroke-width="1"/><line x1="308.37" x2="308.37" y1="704.0" y2="707.5" stroke="#505048" stroke-width="1.6"/><line x1="337.68" x2="337.68" y1="635.5" y2="704.0" stroke="#c6cab8" stroke-width="1"/><line x1="337.68" x2="337.68" y1="704.0" y2="708.5" stroke="#505048" stroke-width="1.6"/><line x1="366.99" x2="366.99" y1="635.5" y2="704.0" stroke="#dde0d0" stroke-width="1"/><line x1="366.99" x2="366.99" y1="704.0" y2="707.5" stroke="#505048" stroke-width="1.6"/><line x1="396.30" x2="396.30" y1="635.5" y2="704.0" stroke="#c6cab8" stroke-width="1"/><line x1="396.30" x2="396.30" y1="704.0" y2="708.5" stroke="#505048" stroke-width="1.6"/><line x1="425.61" x2="425.61" y1="635.5" y2="704.0" stroke="#dde0d0" stroke-width="1"/><line x1="425.61" x2="425.61" y1="704.0" y2="707.5" stroke="#505048" stroke-width="1.6"/><line x1="454.92" x2="454.92" y1="635.5" y2="704.0" stroke="#c6cab8" stroke-width="1"/><line x1="454.92" x2="454.92" y1="704.0" y2="708.5" stroke="#505048" stroke-width="1.6"/><line x1="484.23" x2="484.23" y1="635.5" y2="704.0" stroke="#dde0d0" stroke-width="1"/><line x1="484.23" x2="484.23" y1="704.0" y2="707.5" stroke="#505048" stroke-width="1.6"/><line x1="513.54" x2="513.54" y1="635.5" y2="704.0" stroke="#c6cab8" stroke-width="1"/><line x1="513.54" x2="513.54" y1="704.0" y2="708.5" stroke="#505048" stroke-width="1.6"/><line x1="542.85" x2="542.85" y1="635.5" y2="704.0" stroke="#dde0d0" stroke-width="1"/><line x1="542.85" x2="542.85" y1="704.0" y2="707.5" stroke="#505048" stroke-width="1.6"/><line x1="572.16" x2="572.16" y1="635.5" y2="704.0" stroke="#c6cab8" stroke-width="1"/><line x1="572.16" x2="572.16" y1="704.0" y2="708.5" stroke="#505048" stroke-width="1.6"/><line x1="601.47" x2="601.47" y1="635.5" y2="704.0" stroke="#dde0d0" stroke-width="1"/><line x1="601.47" x2="601.47" y1="704.0" y2="707.5" stroke="#505048" stroke-width="1.6"/><line x1="630.78" x2="630.78" y1="635.5" y2="704.0" stroke="#c6cab8" stroke-width="1"/><line x1="630.78" x2="630.78" y1="704.0" y2="708.5" stroke="#505048" stroke-width="1.6"/><line x1="660.09" x2="660.09" y1="635.5" y2="704.0" stroke="#dde0d0" stroke-width="1"/><line x1="660.09" x2="660.09" y1="704.0" y2="707.5" stroke="#505048" stroke-width="1.6"/><line x1="689.40" x2="689.40" y1="635.5" y2="704.0" stroke="#c6cab8" stroke-width="1"/><line x1="689.40" x2="689.40" y1="704.0" y2="708.5" stroke="#505048" stroke-width="1.6"/><line x1="718.71" x2="718.71" y1="635.5" y2="704.0" stroke="#dde0d0" stroke-width="1"/><line x1="718.71" x2="718.71" y1="704.0" y2="707.5" stroke="#505048" stroke-width="1.6"/><line x1="748.02" x2="748.02" y1="635.5" y2="704.0" stroke="#c6cab8" stroke-width="1"/><line x1="748.02" x2="748.02" y1="704.0" y2="708.5" stroke="#505048" stroke-width="1.6"/><rect x="45.5" y="635.5" width="702.5" height="68.5" fill="none" stroke="#9ca090" stroke-width="1"/><line x1="45.0" x2="748.5" y1="704.0" y2="704.0" stroke="#55574c" stroke-width="2.2"/><rect x="453.75" y="645.5" width="158.75" height="9.0" rx="0" fill="#aeea14"/><rect x="453.75" y="658.75" width="158.75" height="8.75" rx="0" fill="#0a080c"/><rect x="453.75" y="672.5" width="158.75" height="8.75" rx="0" fill="#0a7f12"/><rect x="453.75" y="686.25" width="158.75" height="8.75" rx="0" fill="#9a66e8"/><text x="103.20" y="722" text-anchor="middle" font-family="Liberation Serif" font-size="11.6" fill="#222">17:18:55</text><text x="161.82" y="722" text-anchor="middle" font-family="Liberation Serif" font-size="11.6" fill="#222">17:19:00</text><text x="220.44" y="722" text-anchor="middle" font-family="Liberation Serif" font-size="11.6" fill="#222">17:19:05</text><text x="279.06" y="722" text-anchor="middle" font-family="Liberation Serif" font-size="11.6" fill="#222">17:19:10</text><text x="337.68" y="722" text-anchor="middle" font-family="Liberation Serif" font-size="11.6" fill="#222">17:19:15</text><text x="396.30" y="722" text-anchor="middle" font-family="Liberation Serif" font-size="11.6" fill="#222">17:19:20</text><text x="454.92" y="722" text-anchor="middle" font-family="Liberation Serif" font-size="11.6" fill="#222">17:19:25</text><text x="513.54" y="722" text-anchor="middle" font-family="Liberation Serif" font-size="11.6" fill="#222">17:19:30</text><text x="572.16" y="722" text-anchor="middle" font-family="Liberation Serif" font-size="11.6" fill="#222">17:19:35</text><text x="630.78" y="722" text-anchor="middle" font-family="Liberation Serif" font-size="11.6" fill="#222">17:19:40</text><text x="689.40" y="722" text-anchor="middle" font-family="Liberation Serif" font-size="11.6" fill="#222">17:19:45</text><text x="748.02" y="722" text-anchor="middle" font-family="Liberation Serif" font-size="11.6" fill="#222">17:19:50</text><text x="396" y="737.5" text-anchor="middle" font-family="Liberation Serif" font-size="11.6" fill="#222">Godzina</text><rect x="267.5" y="743.5" width="10" height="10" fill="#fff" stroke="#777" stroke-width="1"/><path d="M269.5 748.5 L271.8 751.5 L275.8 745" stroke="#111" stroke-width="1.5" fill="none"/><rect x="281" y="742" width="12" height="12" fill="#9966e8"/><text x="296" y="752.5" font-family="Liberation Sans" font-size="10.2" fill="#222">Sito</text><rect x="317.0" y="743.5" width="10" height="10" fill="#fff" stroke="#777" stroke-width="1"/><path d="M319.0 748.5 L321.3 751.5 L325.3 745" stroke="#111" stroke-width="1.5" fill="none"/><rect x="330.5" y="742" width="12" height="12" fill="#0a7f14"/><text x="346" y="752.5" font-family="Liberation Sans" font-size="10.2" fill="#222">Poziomy</text><rect x="387.5" y="743.5" width="10" height="10" fill="#fff" stroke="#777" stroke-width="1"/><path d="M389.5 748.5 L391.8 751.5 L395.8 745" stroke="#111" stroke-width="1.5" fill="none"/><rect x="400.5" y="742" width="12" height="12" fill="#0c0a10"/><text x="416" y="752.5" font-family="Liberation Sans" font-size="10.2" fill="#222">Wyrzutnik</text><rect x="463.5" y="743.5" width="10" height="10" fill="#fff" stroke="#777" stroke-width="1"/><path d="M465.5 748.5 L467.8 751.5 L471.8 745" stroke="#111" stroke-width="1.5" fill="none"/><rect x="477" y="742" width="12" height="12" fill="#a8ec10"/><text x="493" y="752.5" font-family="Liberation Sans" font-size="10.2" fill="#222">Skratka</text></svg>
<svg class="a" style="left:808px;top:124px" width="800" height="222" viewBox="0 124 800 222"><defs>
<linearGradient id="gp" x1="0" y1="0" x2="1" y2="0"><stop offset="0" stop-color="#555"/><stop offset="0.45" stop-color="#fff"/><stop offset="1" stop-color="#666"/></linearGradient>
<linearGradient id="barrel" x1="0" y1="0" x2="1" y2="0"><stop offset="0" stop-color="#1060d8"/><stop offset="0.45" stop-color="#d8ecff"/><stop offset="0.6" stop-color="#7ab8f8"/><stop offset="1" stop-color="#1a6ae0"/></linearGradient>
<linearGradient id="coup" x1="0" y1="0" x2="0" y2="1"><stop offset="0" stop-color="#c89aa0"/><stop offset="0.45" stop-color="#fff"/><stop offset="1" stop-color="#a87880"/></linearGradient>
<linearGradient id="hous" x1="0" y1="0" x2="0" y2="1"><stop offset="0" stop-color="#c8a4a8"/><stop offset="1" stop-color="#e0c8c8"/></linearGradient>
<linearGradient id="mgreen" x1="0" y1="0" x2="1" y2="0"><stop offset="0" stop-color="#1a8a2a"/><stop offset="0.3" stop-color="#48b858"/><stop offset="1" stop-color="#0a6a1a"/></linearGradient>
</defs><path d="M33 340 V188 Q33 186 35 186 H214" fill="none" stroke="#6e5c5c" stroke-width="6" stroke-linejoin="miter"/><path d="M33 340 V188 Q33 186 35 186 H214" fill="none" stroke="#fbfbf4" stroke-width="3.2" stroke-linejoin="miter"/><path d="M33 340 V188 Q33 186 35 186 H214" fill="none" stroke="#16701a" stroke-width="3.2" stroke-dasharray="4 4.3" stroke-linejoin="miter"/><path d="M60 340 V203.5 Q60 201.5 62 201.5 H214" fill="none" stroke="#6e5c5c" stroke-width="6" stroke-linejoin="miter"/><path d="M60 340 V203.5 Q60 201.5 62 201.5 H214" fill="none" stroke="#fbfbf4" stroke-width="3.2" stroke-linejoin="miter"/><path d="M60 340 V203.5 Q60 201.5 62 201.5 H214" fill="none" stroke="#16701a" stroke-width="3.2" stroke-dasharray="4 4.3" stroke-linejoin="miter"/><path d="M293 185 H304 Q306.2 185 306.2 187 V264" fill="none" stroke="#6e5c5c" stroke-width="6" stroke-linejoin="miter"/><path d="M293 185 H304 Q306.2 185 306.2 187 V264" fill="none" stroke="#fbfbf4" stroke-width="3.2" stroke-linejoin="miter"/><path d="M293 185 H304 Q306.2 185 306.2 187 V264" fill="none" stroke="#16701a" stroke-width="3.2" stroke-dasharray="4 4.3" stroke-linejoin="miter"/><path d="M497 292 H552 Q556.5 292 556.5 296.5 V337" fill="none" stroke="#707070" stroke-width="9"/><path d="M497 292 H552 Q556.5 292 556.5 296.5 V337" fill="none" stroke="#fafaf6" stroke-width="5.4"/><path d="M497 292 H552 Q556.5 292 556.5 296.5 V337" fill="none" stroke="#127a18" stroke-width="4" stroke-dasharray="5 5"/><rect x="212" y="182" width="5" height="9" rx="1.5" fill="#ddd" stroke="#888" stroke-width="0.6"/><rect x="212" y="197" width="5" height="9" rx="1.5" fill="#ddd" stroke="#888" stroke-width="0.6"/><rect x="493" y="286" width="5" height="13" rx="1.5" fill="#ddd" stroke="#888" stroke-width="0.6"/><path d="M312 268 L362 186 Q364.5 181 367 186 L367 230" fill="none" stroke="#2e2e2e" stroke-width="12.5" stroke-linejoin="round"/><path d="M312 268 L362 186 Q364.5 181 367 186 L367 230" fill="none" stroke="#707070" stroke-width="10.5" stroke-linejoin="round"/><path d="M312 268 L362 186 Q364.5 181 367 186 L367 230" fill="none" stroke="#b0b0b0" stroke-width="8" stroke-linejoin="round"/><path d="M312 268 L362 186 Q364.5 181 367 186 L367 230" fill="none" stroke="#e4e4e4" stroke-width="5" stroke-linejoin="round"/><path d="M312 268 L362 186 Q364.5 181 367 186 L367 230" fill="none" stroke="#ffffff" stroke-width="2.2" stroke-linejoin="round"/><rect x="227" y="133.5" width="55" height="50" rx="9" fill="#dfe8c6" stroke="#1e1e1e" stroke-width="1.1"/><rect x="237" y="167" width="33" height="5.5" fill="#22a040"/><rect x="244" y="164" width="8" height="4" fill="#1a7a2a"/><rect x="249" y="159" width="13" height="9" fill="#a8e0a8"/><path d="M241 145 Q241 141 254 141 Q267 141 267 145 V160 H241 Z" fill="url(#mgreen)"/><ellipse cx="254" cy="144" rx="12" ry="3" fill="#b8e8b8"/><path d="M244 146 V159 M248 146 V159 M252 146 V159 M256 146 V159 M260 146 V159" stroke="#064a10" stroke-width="1"/><rect x="261" y="155" width="6" height="5" fill="#1030e0"/><rect x="216.5" y="172" width="77" height="43" fill="#4a2222" stroke="#1a0a0a" stroke-width="0.8"/><path d="M216.5 215 H293.5 L277 229 H232 Z" fill="#3a1414"/><path d="M229 217 H278.5 L265 229 H242 Z" fill="#3a0404" stroke="#b84848" stroke-width="1.8"/><rect x="195" y="266" width="95" height="59" fill="#6a2828" stroke="#1a0a0a" stroke-width="0.8"/><rect x="200" y="271" width="8" height="4" fill="#111"/><path d="M213 278 L221 268 H290 V278 Z" fill="#5a2020"/><path d="M233 268 V278 M258 268 V278" stroke="#2a0a0a" stroke-width="1"/><rect x="217" y="232" width="5" height="36" fill="#3a1a1a"/><rect x="221" y="229" width="77" height="39" fill="url(#hous)" stroke="#1a0a0a" stroke-width="0.8"/><rect x="221.5" y="229.5" width="76" height="14.5" fill="#fff"/><rect x="296" y="228" width="3" height="40" fill="#111"/><path d="M244 233.5 H253" stroke="#888" stroke-width="2.5"/><path d="M252 231 L256 233.5 L252 236 Z" fill="#888"/><line x1="226" y1="247" x2="268" y2="247" stroke="#c87880" stroke-width="1.5"/><path d="M231.8 248.0 L234.1 240 L236.3 248.0 L234.1 256 Z" fill="#0a0a0a"/><path d="M237.4 248.0 L239.7 240 L241.9 248.0 L239.7 256 Z" fill="#0a0a0a"/><path d="M243.0 248.0 L245.3 240 L247.5 248.0 L245.3 256 Z" fill="#0a0a0a"/><path d="M248.6 248.0 L250.9 240 L253.1 248.0 L250.9 256 Z" fill="#0a0a0a"/><path d="M254.2 248.0 L256.5 240 L258.7 248.0 L256.5 256 Z" fill="#0a0a0a"/><line x1="230.2" y1="256" x2="233.0" y2="240" stroke="#f4d0d8" stroke-width="1"/><line x1="235.8" y1="256" x2="238.6" y2="240" stroke="#f4d0d8" stroke-width="1"/><line x1="241.4" y1="256" x2="244.2" y2="240" stroke="#f4d0d8" stroke-width="1"/><line x1="247.0" y1="256" x2="249.8" y2="240" stroke="#f4d0d8" stroke-width="1"/><line x1="252.6" y1="256" x2="255.4" y2="240" stroke="#f4d0d8" stroke-width="1"/><line x1="258.2" y1="256" x2="261.0" y2="240" stroke="#f4d0d8" stroke-width="1"/><path d="M210 291 H283 V316 H256 L222 328.5 L210 316 Z" fill="#f8f2ec" stroke="#222" stroke-width="0.8"/><path d="M233 298 H241" stroke="#888" stroke-width="2.5"/><path d="M237 295.5 L233 298 L237 300.5 Z" fill="#888"/><clipPath id="icl808"><path transform="translate(488.8 220.9) rotate(-24)" d="M-8 -1.8 V-17.5 H-93 L-102 -13.6 H-178 V-1.8 Z"/></clipPath><g transform="translate(488.8 220.9) rotate(-24)"><path d="M0 0 V-19.7 H-93 L-104 -15.5 H-178 V0 Z" fill="#7a3434" stroke="#3a1010" stroke-width="0.8"/><path d="M-8 -19.5 V0" stroke="#5a2020" stroke-width="1"/></g><g clip-path="url(#icl808)"><path d="M359.5 257.8 L359.5 279.8 L365.1 279.8 L365.1 274.8 L360.0 261.8 Z" fill="#0a0a0a"/><line x1="358.5" y1="180" x2="358.5" y2="300" stroke="#f2ccd4" stroke-width="1.2"/><path d="M366.9 254.5 L366.9 276.5 L372.5 276.5 L372.5 271.5 L367.4 258.5 Z" fill="#0a0a0a"/><line x1="365.9" y1="180" x2="365.9" y2="300" stroke="#f2ccd4" stroke-width="1.2"/><path d="M374.3 251.2 L374.3 273.2 L379.9 273.2 L379.9 268.2 L374.8 255.2 Z" fill="#0a0a0a"/><line x1="373.3" y1="180" x2="373.3" y2="300" stroke="#f2ccd4" stroke-width="1.2"/><path d="M381.7 247.9 L381.7 269.9 L387.3 269.9 L387.3 264.9 L382.2 251.9 Z" fill="#0a0a0a"/><line x1="380.7" y1="180" x2="380.7" y2="300" stroke="#f2ccd4" stroke-width="1.2"/><path d="M389.1 244.6 L389.1 266.6 L394.7 266.6 L394.7 261.6 L389.6 248.6 Z" fill="#0a0a0a"/><line x1="388.1" y1="180" x2="388.1" y2="300" stroke="#f2ccd4" stroke-width="1.2"/><path d="M396.5 241.3 L396.5 263.3 L402.1 263.3 L402.1 258.3 L397.0 245.3 Z" fill="#0a0a0a"/><line x1="395.5" y1="180" x2="395.5" y2="300" stroke="#f2ccd4" stroke-width="1.2"/><path d="M403.9 238.0 L403.9 260.0 L409.5 260.0 L409.5 255.0 L404.4 242.0 Z" fill="#0a0a0a"/><line x1="402.9" y1="180" x2="402.9" y2="300" stroke="#f2ccd4" stroke-width="1.2"/><path d="M411.3 234.7 L411.3 256.7 L416.9 256.7 L416.9 251.7 L411.8 238.7 Z" fill="#0a0a0a"/><line x1="410.3" y1="180" x2="410.3" y2="300" stroke="#f2ccd4" stroke-width="1.2"/><path d="M418.7 231.4 L418.7 253.4 L424.3 253.4 L424.3 248.4 L419.2 235.4 Z" fill="#0a0a0a"/><line x1="417.7" y1="180" x2="417.7" y2="300" stroke="#f2ccd4" stroke-width="1.2"/><path d="M426.1 228.1 L426.1 250.1 L431.7 250.1 L431.7 245.1 L426.6 232.1 Z" fill="#0a0a0a"/><line x1="425.1" y1="180" x2="425.1" y2="300" stroke="#f2ccd4" stroke-width="1.2"/></g><g transform="translate(488.8 220.9) rotate(-24)"><path d="M-172 -6 H-150 M-62 -6 H-14" stroke="#e8b8c0" stroke-width="1.1"/><line x1="-62.0" y1="-3" x2="-58.0" y2="-16.5" stroke="#e8b8c0" stroke-width="1"/><line x1="-51.5" y1="-3" x2="-47.5" y2="-16.5" stroke="#e8b8c0" stroke-width="1"/><line x1="-41.0" y1="-3" x2="-37.0" y2="-16.5" stroke="#e8b8c0" stroke-width="1"/><line x1="-30.5" y1="-3" x2="-26.5" y2="-16.5" stroke="#e8b8c0" stroke-width="1"/><line x1="-20.0" y1="-3" x2="-16.0" y2="-16.5" stroke="#e8b8c0" stroke-width="1"/></g><g transform="translate(373 247) rotate(-24)"><path d="M-5 0 H3" stroke="#8a9090" stroke-width="2.2"/><path d="M2 -2.6 L6 0 L2 2.6 Z" fill="#8a9090"/></g><rect x="283" y="279" width="211" height="46" fill="#7a3a3a"/><rect x="283" y="315" width="211" height="10" fill="#6a2c2c"/><path d="M283 279 H494 V325 M283 315.5 H494 M315 279 V334 M405 279 V334 M494 279 V334 M200 325 V334 M218 325 V334" stroke="#0a0a0a" stroke-width="2.6" fill="none"/><path d="M315 281 L405 315 M315 315 L405 281 M405 281 L494 315 M405 315 L494 281" stroke="#2a0e0e" stroke-width="0.9"/><line x1="213" y1="307.5" x2="303" y2="307.5" stroke="#e8b8c0" stroke-width="1.6"/><path d="M218.8 307.6 L222.2 300 L225.7 307.6 L222.2 315.3 Z" fill="#0a0a0a"/><path d="M227.4 307.6 L230.8 300 L234.3 307.6 L230.8 315.3 Z" fill="#0a0a0a"/><path d="M236.0 307.6 L239.4 300 L242.9 307.6 L239.4 315.3 Z" fill="#0a0a0a"/><path d="M244.6 307.6 L248.0 300 L251.5 307.6 L248.0 315.3 Z" fill="#0a0a0a"/><path d="M253.2 307.6 L256.6 300 L260.1 307.6 L256.6 315.3 Z" fill="#0a0a0a"/><path d="M261.8 307.6 L265.2 300 L268.7 307.6 L265.2 315.3 Z" fill="#0a0a0a"/><path d="M270.4 307.6 L273.8 300 L277.3 307.6 L273.8 315.3 Z" fill="#0a0a0a"/><path d="M279.0 307.6 L282.4 300 L285.9 307.6 L282.4 315.3 Z" fill="#0a0a0a"/><path d="M287.6 307.6 L291.0 300 L294.5 307.6 L291.0 315.3 Z" fill="#0a0a0a"/><line x1="216.2" y1="315.3" x2="220.5" y2="300" stroke="#f4d0d8" stroke-width="1"/><line x1="224.8" y1="315.3" x2="229.1" y2="300" stroke="#f4d0d8" stroke-width="1"/><line x1="233.4" y1="315.3" x2="237.7" y2="300" stroke="#f4d0d8" stroke-width="1"/><line x1="242.0" y1="315.3" x2="246.3" y2="300" stroke="#f4d0d8" stroke-width="1"/><line x1="250.6" y1="315.3" x2="254.9" y2="300" stroke="#f4d0d8" stroke-width="1"/><line x1="259.2" y1="315.3" x2="263.5" y2="300" stroke="#f4d0d8" stroke-width="1"/><line x1="267.8" y1="315.3" x2="272.1" y2="300" stroke="#f4d0d8" stroke-width="1"/><line x1="276.4" y1="315.3" x2="280.7" y2="300" stroke="#f4d0d8" stroke-width="1"/><line x1="285.0" y1="315.3" x2="289.3" y2="300" stroke="#f4d0d8" stroke-width="1"/><line x1="293.6" y1="315.3" x2="297.9" y2="300" stroke="#f4d0d8" stroke-width="1"/><rect x="288" y="263" width="22" height="16" fill="#c89ca0" stroke="#333" stroke-width="0.7"/><path d="M294 263 V279 M304 263 V279" stroke="#7a4a50" stroke-width="0.8"/><rect x="285" y="268" width="4" height="6" fill="#e8d8d8" stroke="#555" stroke-width="0.5"/><g transform="translate(498.5 207.5) rotate(-30)"><rect x="-19" y="-16" width="38" height="32" rx="8" fill="#dfe8c6" stroke="#2a2a2a" stroke-width="1"/></g><g transform="translate(498.5 207.5) rotate(-24)"><rect x="-12" y="-8" width="20" height="15" fill="#22a8b8"/><rect x="7" y="-11.5" width="3" height="22" fill="#138898"/><rect x="-13.5" y="-10" width="2.5" height="19" fill="#138898"/><path d="M-12 -4.5 H7 M-12 -0.5 H7 M-12 3.5 H7" stroke="#0e7888" stroke-width="0.8"/></g><rect x="479" y="222" width="6" height="68" fill="url(#gp)"/><rect x="446" y="289" width="45.5" height="47" rx="2" fill="url(#barrel)"/><rect x="445.5" y="287.7" width="46.5" height="3.6" rx="1.5" fill="url(#barrel)" stroke="#0a4aa8" stroke-width="0.9"/><rect x="445.5" y="302.2" width="46.5" height="3.6" rx="1.5" fill="url(#barrel)" stroke="#0a4aa8" stroke-width="0.9"/><rect x="445.5" y="317.2" width="46.5" height="3.6" rx="1.5" fill="url(#barrel)" stroke="#0a4aa8" stroke-width="0.9"/><rect x="445.5" y="332.7" width="46.5" height="3.6" rx="1.5" fill="url(#barrel)" stroke="#0a4aa8" stroke-width="0.9"/><rect x="182" y="230" width="39" height="34" rx="7" fill="#dfe8c6" stroke="#2a2a2a" stroke-width="1"/><path d="M189 244.81 Q191 247.75 189 250.69 L192 250.69 L192 244.81 Z" fill="#1a9aa8"/><rect x="192" y="235.5" width="3" height="24.5" fill="#138898"/><rect x="195" y="238.93" width="18" height="17.64" fill="#22a8b8"/><line x1="195" x2="213" y1="241.1" y2="241.1" stroke="#0e7888" stroke-width="0.9"/><line x1="195" x2="213" y1="245.5" y2="245.5" stroke="#0e7888" stroke-width="0.9"/><line x1="195" x2="213" y1="250.0" y2="250.0" stroke="#0e7888" stroke-width="0.9"/><line x1="195" x2="213" y1="254.4" y2="254.4" stroke="#0e7888" stroke-width="0.9"/><rect x="213" y="236.725" width="3" height="22.05" fill="#138898"/><rect x="201.15" y="246.525" width="4.859999999999999" height="2.45" fill="#0a5a70"/><rect x="217.5" y="242" width="9" height="12" rx="1" fill="url(#coup)" stroke="#333" stroke-width="0.5"/><rect x="169.5" y="288.5" width="40" height="34" rx="7" fill="#dfe8c6" stroke="#2a2a2a" stroke-width="1"/><path d="M176 302.68600000000004 Q178 305.65000000000003 176 308.61400000000003 L179 308.61400000000003 L179 302.68600000000004 Z" fill="#1a9aa8"/><rect x="179" y="293.3" width="3" height="24.7" fill="#138898"/><rect x="182" y="296.75800000000004" width="18" height="17.784" fill="#22a8b8"/><line x1="182" x2="200" y1="299.0" y2="299.0" stroke="#0e7888" stroke-width="0.9"/><line x1="182" x2="200" y1="303.4" y2="303.4" stroke="#0e7888" stroke-width="0.9"/><line x1="182" x2="200" y1="307.9" y2="307.9" stroke="#0e7888" stroke-width="0.9"/><line x1="182" x2="200" y1="312.3" y2="312.3" stroke="#0e7888" stroke-width="0.9"/><rect x="200" y="294.535" width="3" height="22.23" fill="#138898"/><rect x="188.15" y="304.415" width="4.859999999999999" height="2.47" fill="#0a5a70"/><rect x="205" y="301" width="8.5" height="11.5" rx="1" fill="url(#coup)" stroke="#333" stroke-width="0.5"/><text x="104.5" y="177.5" font-family="Liberation Sans" font-weight="bold" font-size="13" letter-spacing="0.15" fill="#0a0a0a">Przelew</text><text x="77.5" y="219" font-family="Liberation Sans" font-weight="bold" font-size="13" letter-spacing="0.15" fill="#0a0a0a">Z Przewpompowni</text><text x="375.5" y="204" font-family="Liberation Sans" font-weight="bold" font-size="13" letter-spacing="0.15" fill="#0a0a0a">Skratek</text><text x="487" y="254" font-family="Liberation Sans" font-weight="bold" font-size="13" letter-spacing="0.15" fill="#0a0a0a">Piasek</text><text x="562" y="304" font-family="Liberation Sans" font-weight="bold" font-size="13" letter-spacing="0.15" fill="#0a0a0a">Do Zbiornika</text><text x="562" y="317.5" font-family="Liberation Sans" font-weight="bold" font-size="13" letter-spacing="0.15" fill="#0a0a0a">Buforowego</text></svg>
<svg class="a" style="left:800px;top:124px" width="800" height="222" viewBox="0 124 800 222"><rect x="563.5" y="173.5" width="201" height="74" fill="#dde8c0" stroke="#333" stroke-width="1"/><text x="662.5" y="196" text-anchor="middle" font-family="Liberation Sans" font-weight="bold" font-size="13" letter-spacing="0.3" fill="#0a0a0a">Tryb Automatyczny</text><rect x="629.5" y="208.5" width="72" height="28" rx="4" fill="#f0f4e0" stroke="#3a5a1a" stroke-width="1"/><rect x="631.5" y="210.5" width="68" height="24" rx="3" fill="#8cd65c" stroke="#5a8a3a" stroke-width="0.8"/><text x="665" y="228" text-anchor="middle" font-family="Liberation Serif" font-size="16" fill="#111">STOP</text></svg>
<div class="hdr" style="left:831px;top:343px;width:325px;height:26px;font-size:12.5px;line-height:25px">Sitopiaskownik II</div>
<div class="row" style="left:831px;top:368px;width:325px;height:26px;background:#ebf1d9;border-top:1px solid #333"></div>
<div class="lbl" style="left:857px;top:374px">Czas Auto-Stop</div>
<div class="inp" style="left:1045px;top:372px;width:67px;height:17px">0</div>
<div class="lbl" style="left:1115px;top:373px">sec</div>
<div class="row" style="left:831px;top:393px;width:325px;height:26px;background:#dce7c3;border-top:1px solid #333"></div>
<div class="lbl" style="left:857px;top:399px">Opoznienie Kluwo</div>
<div class="inp" style="left:1045px;top:397px;width:67px;height:17px">0</div>
<div class="lbl" style="left:1115px;top:398px">sec</div>
<div class="row" style="left:831px;top:418px;width:325px;height:26px;background:#ebf1d9;border-top:1px solid #333"></div>
<div class="lbl" style="left:857px;top:424px">Praca Skratka</div>
<div class="inp" style="left:1045px;top:422px;width:67px;height:17px">0</div>
<div class="lbl" style="left:1115px;top:423px">sec</div>
<div class="row" style="left:831px;top:443px;width:325px;height:26px;background:#dce7c3;border-top:1px solid #333"></div>
<div class="lbl" style="left:857px;top:449px">Pauza Skratka</div>
<div class="inp" style="left:1045px;top:447px;width:67px;height:17px">0</div>
<div class="lbl" style="left:1115px;top:448px">sec</div>
<div class="row" style="left:831px;top:468px;width:325px;height:26px;background:#ebf1d9;border-top:1px solid #333"></div>
<div class="lbl" style="left:857px;top:474px">Praca Slimak Dolny</div>
<div class="inp" style="left:1045px;top:472px;width:67px;height:17px">0</div>
<div class="lbl" style="left:1115px;top:473px">sec</div>
<div class="row" style="left:831px;top:493px;width:325px;height:26px;background:#dce7c3;border-top:1px solid #333"></div>
<div class="lbl" style="left:857px;top:499px">Pauza Slimak Dolny</div>
<div class="inp" style="left:1045px;top:497px;width:67px;height:17px">0</div>
<div class="lbl" style="left:1115px;top:498px">sec</div>
<div class="row" style="left:831px;top:518px;width:325px;height:26px;background:#ebf1d9;border-top:1px solid #333"></div>
<div class="lbl" style="left:857px;top:524px">Praca Slimak Wyrzut.</div>
<div class="inp" style="left:1045px;top:522px;width:67px;height:17px">0</div>
<div class="lbl" style="left:1115px;top:523px">sec</div>
<div class="row" style="left:831px;top:543px;width:325px;height:26px;background:#dce7c3;border-top:1px solid #333"></div>
<div class="lbl" style="left:857px;top:549px">Pauza Slimak Wyrzut.</div>
<div class="inp" style="left:1045px;top:547px;width:67px;height:17px">0</div>
<div class="lbl" style="left:1115px;top:548px">sec</div>
<div class="row" style="left:831px;top:568px;width:325px;height:26px;background:#ebf1d9;border-top:1px solid #333"></div>
<div class="lbl" style="left:857px;top:574px">Praca Zawór</div>
<div class="inp" style="left:1045px;top:572px;width:67px;height:17px">0</div>
<div class="lbl" style="left:1115px;top:573px">sec</div>
<div class="hdr" style="left:1235px;top:343px;width:325px;height:36px;font-size:12.5px;line-height:36px;text-align:left"><span style="position:absolute;left:0;width:205px;text-align:center">Napęd Sito</span></div>
<div class="a" style="z-index:3;left:1464px;top:348px;width:91px;height:27px;border-radius:5px;background:#9aae6c;border:1.5px solid #c2d89a;box-shadow:inset 0 0 0 1px #8a9e5e"></div>
<div class="t" style="z-index:3;left:1464px;width:91px;top:354px;text-align:center;font-family:'Liberation Serif', serif;font-size:15.2px;color:#111">Ręka</div>
<div class="row" style="left:1235px;top:378px;width:325px;height:26px;background:#ebf1d9;border-top:1px solid #222"></div>
<div class="lbl" style="left:1261px;top:385px">Czas pracy</div>
<div class="inp" style="left:1380px;top:382px;width:53px;height:18px">0</div>
<div class="lbl" style="left:1436px;top:383px">hrs</div>
<div class="inp" style="left:1471px;top:382px;width:54px;height:18px">0</div>
<div class="lbl" style="left:1528px;top:383px">min</div>
<div class="hdr" style="left:1235px;top:407px;width:325px;height:36px;font-size:12.5px;line-height:36px;text-align:left"><span style="position:absolute;left:0;width:205px;text-align:center">Napęd Skratka</span></div>
<div class="a" style="z-index:3;left:1464px;top:412px;width:91px;height:27px;border-radius:5px;background:#9aae6c;border:1.5px solid #c2d89a;box-shadow:inset 0 0 0 1px #8a9e5e"></div>
<div class="t" style="z-index:3;left:1464px;width:91px;top:418px;text-align:center;font-family:'Liberation Serif', serif;font-size:15.2px;color:#111">Ręka</div>
<div class="row" style="left:1235px;top:442px;width:325px;height:26px;background:#ebf1d9;border-top:1px solid #222"></div>
<div class="lbl" style="left:1261px;top:449px">Czas pracy</div>
<div class="inp" style="left:1380px;top:446px;width:53px;height:18px">0</div>
<div class="lbl" style="left:1436px;top:447px">hrs</div>
<div class="inp" style="left:1471px;top:446px;width:54px;height:18px">0</div>
<div class="lbl" style="left:1528px;top:447px">min</div>
<div class="hdr" style="left:1235px;top:470px;width:325px;height:36px;font-size:12.5px;line-height:36px;text-align:left"><span style="position:absolute;left:0;width:205px;text-align:center">Napęd Slimak Poziomy</span></div>
<div class="a" style="z-index:3;left:1464px;top:475px;width:91px;height:27px;border-radius:5px;background:#9aae6c;border:1.5px solid #c2d89a;box-shadow:inset 0 0 0 1px #8a9e5e"></div>
<div class="t" style="z-index:3;left:1464px;width:91px;top:481px;text-align:center;font-family:'Liberation Serif', serif;font-size:15.2px;color:#111">Ręka</div>
<div class="row" style="left:1235px;top:505px;width:325px;height:26px;background:#ebf1d9;border-top:1px solid #222"></div>
<div class="lbl" style="left:1261px;top:512px">Czas pracy</div>
<div class="inp" style="left:1380px;top:509px;width:53px;height:18px">0</div>
<div class="lbl" style="left:1436px;top:510px">hrs</div>
<div class="inp" style="left:1471px;top:509px;width:54px;height:18px">0</div>
<div class="lbl" style="left:1528px;top:510px">min</div>
<div class="hdr" style="left:1235px;top:533px;width:325px;height:36px;font-size:12.5px;line-height:36px;text-align:left"><span style="position:absolute;left:0;width:205px;text-align:center">Napęd Wyrzut</span></div>
<div class="a" style="z-index:3;left:1464px;top:538px;width:91px;height:27px;border-radius:5px;background:#9aae6c;border:1.5px solid #c2d89a;box-shadow:inset 0 0 0 1px #8a9e5e"></div>
<div class="t" style="z-index:3;left:1464px;width:91px;top:544px;text-align:center;font-family:'Liberation Serif', serif;font-size:15.2px;color:#111">Ręka</div>
<div class="row" style="left:1235px;top:568px;width:325px;height:26px;background:#ebf1d9;border-top:1px solid #222"></div>
<div class="lbl" style="left:1261px;top:575px">Czas pracy</div>
<div class="inp" style="left:1380px;top:572px;width:53px;height:18px">0</div>
<div class="lbl" style="left:1436px;top:573px">hrs</div>
<div class="inp" style="left:1471px;top:572px;width:54px;height:18px">0</div>
<div class="lbl" style="left:1528px;top:573px">min</div>
<div class="a" style="left:833px;top:597px;width:719px;height:32px;background:#e0e0e0;border-radius:2px"></div>
<div class="a" style="left:1552px;top:597px;width:6px;height:32px;background:#e8e8e8"></div>
<svg class="a" style="left:1552px;top:618px" width="8" height="10"><path d="M1.5 3.5 H6.5 M1.5 5 L4 7.5 L6.5 5 Z" stroke="#555" stroke-width="1" fill="#555"/></svg>
<svg class="a" style="left:833px;top:597px" width="420" height="32" viewBox="25 597 420 32">
<defs>
<linearGradient id="tri808" x1="0" y1="0" x2="1" y2="1"><stop offset="0" stop-color="#bfe4fa"/><stop offset="0.6" stop-color="#4aa6e6"/><stop offset="1" stop-color="#2274c0"/></linearGradient>
</defs>
<!-- tools -->
<path d="M31 606 L47 621" stroke="#4a4a5a" stroke-width="4.6" stroke-linecap="round"/>
<path d="M31 606 L47 621" stroke="#eef0f8" stroke-width="2.8" stroke-linecap="round"/>
<circle cx="30" cy="605" r="3.6" fill="#eef0f8" stroke="#4a4a5a" stroke-width="0.9"/>
<circle cx="47.5" cy="621.5" r="3.6" fill="#eef0f8" stroke="#4a4a5a" stroke-width="0.9"/>
<path d="M27.5 601.5 L30.5 605 L26 605.5 Z" fill="#e0e0e0"/>
<path d="M51 625 L47.5 621.5 L52 620.5 Z" fill="#e0e0e0"/>
<path d="M47.5 603 L40 610.5" stroke="#3a80c0" stroke-width="4.4" stroke-linecap="round"/>
<path d="M47.5 603 L40 610.5" stroke="#8ccaf4" stroke-width="2.6" stroke-linecap="round"/>
<path d="M40 610.5 L36 614.5" stroke="#1a3a8a" stroke-width="4.2"/>
<path d="M36 614.5 L28.5 622" stroke="#666" stroke-width="2.4" stroke-linecap="round"/>
<path d="M36 614.5 L28.5 622" stroke="#ddd" stroke-width="1" stroke-linecap="round"/>
<!-- pause -->
<rect x="60" y="608" width="3.5" height="10" fill="#1e9ad8"/><rect x="66.5" y="608" width="3.5" height="10" fill="#1e9ad8"/>
<!-- doc -->
<path d="M82 602 H97 L100 605 V622 H82 Z" fill="#fafafa" stroke="#d8d8d8" stroke-width="0.6"/>
<path d="M96 602 L100 606 L96 606 Z" fill="#3a8aa8"/>
<path d="M85 607.5 H94 M85 610.5 H97 M85 613.5 H97 M85 617 H93 M85 620 H88" stroke="#a8a8a8" stroke-width="1.2"/>
<path d="M90 618 L94 621.5 L102 614" stroke="#28c0e8" stroke-width="2.8" fill="none"/>
<!-- sep -->
<rect x="107" y="600" width="1" height="26" fill="#c0c0c0"/>
<!-- floppy -->
<path d="M114 603 H131 Q133 603 133 605 V621 Q133 623 131 623 H116 L112 619 V605 Q112 603 114 603 Z" fill="#1e8fe0"/>
<rect x="117" y="604" width="11" height="6" fill="#c8c8c8"/>
<rect x="118" y="616" width="9" height="7" fill="#f4f4f4"/><rect x="123" y="618" width="2" height="3" fill="#888"/>
<!-- printer -->
<rect x="143" y="603" width="12" height="9" fill="#fafafa" stroke="#ddd" stroke-width="0.5"/>
<path d="M145 605.5 H153 M145 607.5 H153 M145 609.5 H153" stroke="#999" stroke-width="0.8"/>
<rect x="141" y="611" width="17" height="7" rx="1" fill="#3a9ee0"/>
<rect x="142" y="620" width="14" height="2.5" fill="#707070"/>
<!-- sep -->
<rect x="164" y="600" width="1" height="26" fill="#c0c0c0"/>
<!-- first -->
<rect x="171" y="605" width="4" height="16" rx="2" fill="url(#tri808)" stroke="#4a8ac8" stroke-width="0.6"/>
<path d="M191 604 V622 L177 613 Z" fill="url(#tri808)" stroke="#3a7ac0" stroke-width="0.6"/>
<!-- prev -->
<path d="M214 603.5 V622 L200 613 Z" fill="url(#tri808)" stroke="#3a7ac0" stroke-width="0.6"/>
<!-- next -->
<path d="M304 604 V622 L318 613 Z" fill="url(#tri808)" stroke="#3a7ac0" stroke-width="0.6"/>
<!-- last -->
<path d="M328 604.5 V622 L341 613 Z" fill="url(#tri808)" stroke="#3a7ac0" stroke-width="0.6"/>
<rect x="343.5" y="605" width="4" height="16" rx="2" fill="url(#tri808)" stroke="#4a8ac8" stroke-width="0.6"/>
<!-- refresh -->
<path d="M366 608 A7.5 7.5 0 1 0 369 616" stroke="#3aa4ec" stroke-width="3.6" fill="none"/>
<path d="M361 602 L370 604.5 L365.5 611 Z" fill="#5ac0f4"/>
<!-- up y -->
<path d="M387.5 620 V609" stroke="#3a9ee0" stroke-width="2"/><path d="M383.5 610.5 L387.5 604.5 L391.5 610.5 Z" fill="#3a9ee0"/>
<path d="M392 607.5 L394 610 L396 607.5 M394 610 V613" stroke="#3a9ee0" stroke-width="1.2" fill="none"/>
<!-- x arrow -->
<path d="M413 604.5 L417 610.5 M417 604.5 L413 610.5" stroke="#3a9ee0" stroke-width="1.3"/>
<path d="M409 617.5 H422" stroke="#3a9ee0" stroke-width="2"/><path d="M421 613.5 L427 617.5 L421 621.5 Z" fill="#3a9ee0"/>
<!-- sep -->
<rect x="432" y="600" width="1" height="26" fill="#c0c0c0"/>
</svg>
<div class="a" style="left:1029px;top:600px;width:75px;height:26px;background:#fff;border:1px solid #f4f4f4"></div>
<div class="a" style="left:1094px;top:601px;width:9px;height:24px;background:#d8d8d8"></div>
<svg class="a" style="left:1095px;top:610px" width="7" height="5"><path d="M1 1 H6 L3.5 4 Z" fill="#222"/></svg>
<div class="t" style="left:1031px;top:608px;font-size:10.6px;color:#222">DefaultTime</div>
<div class="t" style="left:1246px;top:608px;font-size:10.2px;color:#b4b4b4">DownTime</div>
<div class="a" style="left:1299px;top:600px;width:37px;height:26px;background:#fff"></div>
<div class="t" style="left:1302px;top:608px;font-size:11px;color:#222">0</div>
<div class="a" style="left:1338px;top:600px;width:75px;height:26px;background:#fff;border:1px solid #f4f4f4"></div>
<div class="a" style="left:1403px;top:601px;width:9px;height:24px;background:#d8d8d8"></div>
<svg class="a" style="left:1404px;top:610px" width="7" height="5"><path d="M1 1 H6 L3.5 4 Z" fill="#222"/></svg>
<div class="t" style="left:1339px;top:608px;font-size:10.6px;color:#222">Second</div>
<svg class="a" style="left:808px;top:0" width="800" height="760" viewBox="0 0 800 760"><rect x="45.5" y="635.5" width="702.5" height="68.5" fill="#f2f7e4"/><line x1="45.5" x2="748.0" y1="642.35" y2="642.35" stroke="#e0e3d4" stroke-width="1"/><line x1="45.5" x2="748.0" y1="649.20" y2="649.20" stroke="#bcc0b0" stroke-width="1"/><line x1="45.5" x2="748.0" y1="656.05" y2="656.05" stroke="#e0e3d4" stroke-width="1"/><line x1="45.5" x2="748.0" y1="662.90" y2="662.90" stroke="#bcc0b0" stroke-width="1"/><line x1="45.5" x2="748.0" y1="669.75" y2="669.75" stroke="#e0e3d4" stroke-width="1"/><line x1="45.5" x2="748.0" y1="676.60" y2="676.60" stroke="#bcc0b0" stroke-width="1"/><line x1="45.5" x2="748.0" y1="683.45" y2="683.45" stroke="#e0e3d4" stroke-width="1"/><line x1="45.5" x2="748.0" y1="690.30" y2="690.30" stroke="#bcc0b0" stroke-width="1"/><line x1="45.5" x2="748.0" y1="697.15" y2="697.15" stroke="#e0e3d4" stroke-width="1"/><line x1="55.75" x2="55.75" y1="635.5" y2="704.0" stroke="#c6cab8" stroke-width="1"/><line x1="55.75" x2="55.75" y1="704.0" y2="708.5" stroke="#505048" stroke-width="1.6"/><line x1="90.92" x2="90.92" y1="635.5" y2="704.0" stroke="#dde0d0" stroke-width="1"/><line x1="90.92" x2="90.92" y1="704.0" y2="707.5" stroke="#505048" stroke-width="1.6"/><line x1="126.10" x2="126.10" y1="635.5" y2="704.0" stroke="#c6cab8" stroke-width="1"/><line x1="126.10" x2="126.10" y1="704.0" y2="708.5" stroke="#505048" stroke-width="1.6"/><line x1="161.27" x2="161.27" y1="635.5" y2="704.0" stroke="#dde0d0" stroke-width="1"/><line x1="161.27" x2="161.27" y1="704.0" y2="707.5" stroke="#505048" stroke-width="1.6"/><line x1="196.45" x2="196.45" y1="635.5" y2="704.0" stroke="#c6cab8" stroke-width="1"/><line x1="196.45" x2="196.45" y1="704.0" y2="708.5" stroke="#505048" stroke-width="1.6"/><line x1="231.62" x2="231.62" y1="635.5" y2="704.0" stroke="#dde0d0" stroke-width="1"/><line x1="231.62" x2="231.62" y1="704.0" y2="707.5" stroke="#505048" stroke-width="1.6"/><line x1="266.80" x2="266.80" y1="635.5" y2="704.0" stroke="#c6cab8" stroke-width="1"/><line x1="266.80" x2="266.80" y1="704.0" y2="708.5" stroke="#505048" stroke-width="1.6"/><line x1="301.97" x2="301.97" y1="635.5" y2="704.0" stroke="#dde0d0" stroke-width="1"/><line x1="301.97" x2="301.97" y1="704.0" y2="707.5" stroke="#505048" stroke-width="1.6"/><line x1="337.15" x2="337.15" y1="635.5" y2="704.0" stroke="#c6cab8" stroke-width="1"/><line x1="337.15" x2="337.15" y1="704.0" y2="708.5" stroke="#505048" stroke-width="1.6"/><line x1="372.32" x2="372.32" y1="635.5" y2="704.0" stroke="#dde0d0" stroke-width="1"/><line x1="372.32" x2="372.32" y1="704.0" y2="707.5" stroke="#505048" stroke-width="1.6"/><line x1="407.50" x2="407.50" y1="635.5" y2="704.0" stroke="#c6cab8" stroke-width="1"/><line x1="407.50" x2="407.50" y1="704.0" y2="708.5" stroke="#505048" stroke-width="1.6"/><line x1="442.67" x2="442.67" y1="635.5" y2="704.0" stroke="#dde0d0" stroke-width="1"/><line x1="442.67" x2="442.67" y1="704.0" y2="707.5" stroke="#505048" stroke-width="1.6"/><line x1="477.85" x2="477.85" y1="635.5" y2="704.0" stroke="#c6cab8" stroke-width="1"/><line x1="477.85" x2="477.85" y1="704.0" y2="708.5" stroke="#505048" stroke-width="1.6"/><line x1="513.02" x2="513.02" y1="635.5" y2="704.0" stroke="#dde0d0" stroke-width="1"/><line x1="513.02" x2="513.02" y1="704.0" y2="707.5" stroke="#505048" stroke-width="1.6"/><line x1="548.20" x2="548.20" y1="635.5" y2="704.0" stroke="#c6cab8" stroke-width="1"/><line x1="548.20" x2="548.20" y1="704.0" y2="708.5" stroke="#505048" stroke-width="1.6"/><line x1="583.37" x2="583.37" y1="635.5" y2="704.0" stroke="#dde0d0" stroke-width="1"/><line x1="583.37" x2="583.37" y1="704.0" y2="707.5" stroke="#505048" stroke-width="1.6"/><line x1="618.55" x2="618.55" y1="635.5" y2="704.0" stroke="#c6cab8" stroke-width="1"/><line x1="618.55" x2="618.55" y1="704.0" y2="708.5" stroke="#505048" stroke-width="1.6"/><line x1="653.72" x2="653.72" y1="635.5" y2="704.0" stroke="#dde0d0" stroke-width="1"/><line x1="653.72" x2="653.72" y1="704.0" y2="707.5" stroke="#505048" stroke-width="1.6"/><line x1="688.90" x2="688.90" y1="635.5" y2="704.0" stroke="#c6cab8" stroke-width="1"/><line x1="688.90" x2="688.90" y1="704.0" y2="708.5" stroke="#505048" stroke-width="1.6"/><line x1="724.07" x2="724.07" y1="635.5" y2="704.0" stroke="#dde0d0" stroke-width="1"/><line x1="724.07" x2="724.07" y1="704.0" y2="707.5" stroke="#505048" stroke-width="1.6"/><line x1="747.50" x2="747.50" y1="635.5" y2="704.0" stroke="#c6cab8" stroke-width="1"/><line x1="747.50" x2="747.50" y1="704.0" y2="708.5" stroke="#505048" stroke-width="1.6"/><rect x="45.5" y="635.5" width="702.5" height="68.5" fill="none" stroke="#9ca090" stroke-width="1"/><line x1="45.0" x2="748.5" y1="704.0" y2="704.0" stroke="#55574c" stroke-width="2.2"/><rect x="150" y="645.5" width="31.25" height="9.0" rx="2" fill="#aeea14"/><rect x="150" y="658.75" width="31.25" height="8.75" rx="2" fill="#0a080c"/><rect x="150" y="672.5" width="31.25" height="8.75" rx="2" fill="#0a7f12"/><rect x="150" y="686.25" width="31.25" height="8.75" rx="2" fill="#9a66e8"/><text x="55.75" y="722" text-anchor="middle" font-family="Liberation Serif" font-size="11.6" fill="#222">17:18:00</text><text x="126.10" y="722" text-anchor="middle" font-family="Liberation Serif" font-size="11.6" fill="#222">17:19:00</text><text x="196.45" y="722" text-anchor="middle" font-family="Liberation Serif" font-size="11.6" fill="#222">17:20:00</text><text x="266.80" y="722" text-anchor="middle" font-family="Liberation Serif" font-size="11.6" fill="#222">17:21:00</text><text x="337.15" y="722" text-anchor="middle" font-family="Liberation Serif" font-size="11.6" fill="#222">17:22:00</text><text x="407.50" y="722" text-anchor="middle" font-family="Liberation Serif" font-size="11.6" fill="#222">17:23:00</text><text x="477.85" y="722" text-anchor="middle" font-family="Liberation Serif" font-size="11.6" fill="#222">17:24:00</text><text x="548.20" y="722" text-anchor="middle" font-family="Liberation Serif" font-size="11.6" fill="#222">17:25:00</text><text x="618.55" y="722" text-anchor="middle" font-family="Liberation Serif" font-size="11.6" fill="#222">17:26:00</text><text x="688.90" y="722" text-anchor="middle" font-family="Liberation Serif" font-size="11.6" fill="#222">17:27:00</text><text x="747.50" y="722" text-anchor="middle" font-family="Liberation Serif" font-size="11.6" fill="#222">17:27:50</text><text x="396" y="737.5" text-anchor="middle" font-family="Liberation Serif" font-size="11.6" fill="#222">Godzina</text><rect x="267.5" y="743.5" width="10" height="10" fill="#fff" stroke="#777" stroke-width="1"/><path d="M269.5 748.5 L271.8 751.5 L275.8 745" stroke="#111" stroke-width="1.5" fill="none"/><rect x="281" y="742" width="12" height="12" fill="#9966e8"/><text x="296" y="752.5" font-family="Liberation Sans" font-size="10.2" fill="#222">Sito</text><rect x="317.0" y="743.5" width="10" height="10" fill="#fff" stroke="#777" stroke-width="1"/><path d="M319.0 748.5 L321.3 751.5 L325.3 745" stroke="#111" stroke-width="1.5" fill="none"/><rect x="330.5" y="742" width="12" height="12" fill="#0a7f14"/><text x="346" y="752.5" font-family="Liberation Sans" font-size="10.2" fill="#222">Poziomy</text><rect x="387.5" y="743.5" width="10" height="10" fill="#fff" stroke="#777" stroke-width="1"/><path d="M389.5 748.5 L391.8 751.5 L395.8 745" stroke="#111" stroke-width="1.5" fill="none"/><rect x="400.5" y="742" width="12" height="12" fill="#0c0a10"/><text x="416" y="752.5" font-family="Liberation Sans" font-size="10.2" fill="#222">Wyrzutnik</text><rect x="463.5" y="743.5" width="10" height="10" fill="#fff" stroke="#777" stroke-width="1"/><path d="M465.5 748.5 L467.8 751.5 L471.8 745" stroke="#111" stroke-width="1.5" fill="none"/><rect x="477" y="742" width="12" height="12" fill="#a8ec10"/><text x="493" y="752.5" font-family="Liberation Sans" font-size="10.2" fill="#222">Skratka</text></svg>
<div class="a" style="left:0;top:768px;width:1600px;height:102px;background:#fff;border:1px solid #e0e0e0;border-left:2px solid #dcdcdc"></div>
<div class="a" style="left:1px;top:788px;width:1598px;height:2px;background:#e8e8e8"></div>
<div class="t" style="left:1.0px;width:83.35px;top:773px;text-align:center;font-size:11.1px;color:#222">Alarm Name</div>
<div class="a" style="left:84.3px;top:769px;width:1px;height:19px;background:#e4e4e4"></div>
<div class="t" style="left:84.3px;width:83.35px;top:773px;text-align:center;font-size:11.1px;color:#222">Variable Path</div>
<div class="a" style="left:167.7px;top:769px;width:1px;height:19px;background:#e4e4e4"></div>
<div class="t" style="left:167.7px;width:83.35px;top:773px;text-align:center;font-size:11.1px;color:#222">Trigger Time</div>
<div class="a" style="left:251.0px;top:769px;width:1px;height:19px;background:#e4e4e4"></div>
<div class="t" style="left:251.0px;width:83.35px;top:773px;text-align:center;font-size:11.1px;color:#222">Ack Time</div>
<div class="a" style="left:334.4px;top:769px;width:1px;height:19px;background:#e4e4e4"></div>
<div class="t" style="left:334.4px;width:83.35px;top:773px;text-align:center;font-size:11.1px;color:#222">Recovery Time</div>
<div class="a" style="left:417.8px;top:769px;width:1px;height:19px;background:#e4e4e4"></div>
<div class="t" style="left:417.8px;width:83.35px;top:773px;text-align:center;font-size:11.1px;color:#222">Record Type</div>
<div class="a" style="left:501.1px;top:769px;width:1px;height:19px;background:#e4e4e4"></div>
<div class="t" style="left:501.1px;width:83.35px;top:773px;text-align:center;font-size:11.1px;color:#222">Alarm Type</div>
<div class="a" style="left:584.4px;top:769px;width:1px;height:19px;background:#e4e4e4"></div>
<div class="t" style="left:584.4px;width:83.35px;top:773px;text-align:center;font-size:11.1px;color:#222">Alarm Level</div>
<div class="a" style="left:667.8px;top:769px;width:1px;height:19px;background:#e4e4e4"></div>
<div class="t" style="left:667.8px;width:83.35px;top:773px;text-align:center;font-size:11.1px;color:#222">Alarm Text</div>
<div class="a" style="left:751.1px;top:769px;width:1px;height:19px;background:#e4e4e4"></div>
<div class="t" style="left:751.1px;width:83.35px;top:773px;text-align:center;font-size:11.1px;color:#222">Alarm Value</div>
<div class="a" style="left:834.5px;top:769px;width:1px;height:19px;background:#e4e4e4"></div>
<div class="t" style="left:834.5px;width:83.35px;top:773px;text-align:center;font-size:11.1px;color:#222">Limit Value</div>
<div class="a" style="left:917.9px;top:769px;width:1px;height:19px;background:#e4e4e4"></div>
<div class="t" style="left:917.8px;width:83.35px;top:773px;text-align:center;font-size:11.1px;color:#222">Current Value</div>
<div class="a" style="left:1001.2px;top:769px;width:1px;height:19px;background:#e4e4e4"></div>
<div class="t" style="left:1001.2px;width:83.35px;top:773px;text-align:center;font-size:11.1px;color:#222">Recovery Value</div>
<div class="a" style="left:1084.5px;top:769px;width:1px;height:19px;background:#e4e4e4"></div>
<div class="t" style="left:1084.5px;width:83.35px;top:773px;text-align:center;font-size:11.1px;color:#222">Alarm Source</div>
<div class="a" style="left:1167.9px;top:769px;width:1px;height:19px;background:#e4e4e4"></div>
<div class="t" style="left:1167.9px;width:83.35px;top:773px;text-align:center;font-size:11.1px;color:#222">Description</div>
<div class="a" style="left:1251.2px;top:769px;width:1px;height:19px;background:#e4e4e4"></div>
<div class="a" style="left:0;top:870px;width:1600px;height:30px;background:#c3c3c3"></div>
<div class="t" style="left:12px;top:876px;font-size:15.2px;color:#111">BIO Proces</div>
<div class="t" style="left:208px;top:878px;font-size:13.2px;color:#111">Time:&nbsp; 5/7/2025 5:19:38 PM</div>
<div class="t" style="left:426px;top:878px;font-size:13.2px;color:#111">Current user:</div>
<div class="t" style="left:516px;top:878px;font-size:13.2px;color:#111">Admin</div>
<div class="t" style="left:642px;top:878px;font-size:13.2px;color:#111">Status:</div>
<div class="t" style="left:701px;top:878px;font-size:13.2px;color:#111">Normal</div>
<div class="t" style="left:1553px;top:878px;font-size:16.8px;color:#111">Exit</div>
<svg class="a" style="left:176px;top:873px" width="24" height="24"><defs><radialGradient id="sg1" cx="0.4" cy="0.35" r="0.7"><stop offset="0" stop-color="#8ad0f8"/><stop offset="1" stop-color="#2070b8"/></radialGradient></defs>
<circle cx="12" cy="12" r="11" fill="url(#sg1)"/>
<path d="M5 7 Q9 3 13 4 L12 8 Q9 10 9 13 Q6 14 4 12 Q3 9 5 7 Z" fill="#9ad42a"/>
<path d="M14 10 Q19 10 21 14 Q19 19 15 21 Q13 17 14 10 Z" fill="#9ad42a"/>
<path d="M7 15 Q10 15 11 19 L9 21 Q6 19 7 15 Z" fill="#9ad42a"/></svg>
<svg class="a" style="left:396px;top:873px" width="24" height="24"><defs><radialGradient id="sg2" cx="0.4" cy="0.3" r="0.8"><stop offset="0" stop-color="#d8d8e8"/><stop offset="1" stop-color="#5a5a72"/></radialGradient></defs>
<circle cx="12" cy="12.5" r="11" fill="url(#sg2)"/><circle cx="12" cy="10" r="4" fill="#6a6a80"/><path d="M5 19 Q7 14 12 14.5 Q17 14 19 19 Q12 23 5 19 Z" fill="#6a6a80"/></svg>
<svg class="a" style="left:611px;top:873px" width="24" height="24"><defs><radialGradient id="sg3" cx="0.4" cy="0.3" r="0.8"><stop offset="0" stop-color="#9ae4ff"/><stop offset="1" stop-color="#1a84d8"/></radialGradient></defs>
<circle cx="12" cy="12" r="11" fill="url(#sg3)"/>
<path d="M5 10 Q12 4 19 10" stroke="#fff" stroke-width="1.8" fill="none"/><path d="M7.5 13 Q12 9 16.5 13" stroke="#fff" stroke-width="1.8" fill="none"/><circle cx="12" cy="16" r="1.6" fill="#fff"/></svg>
</body></html>
